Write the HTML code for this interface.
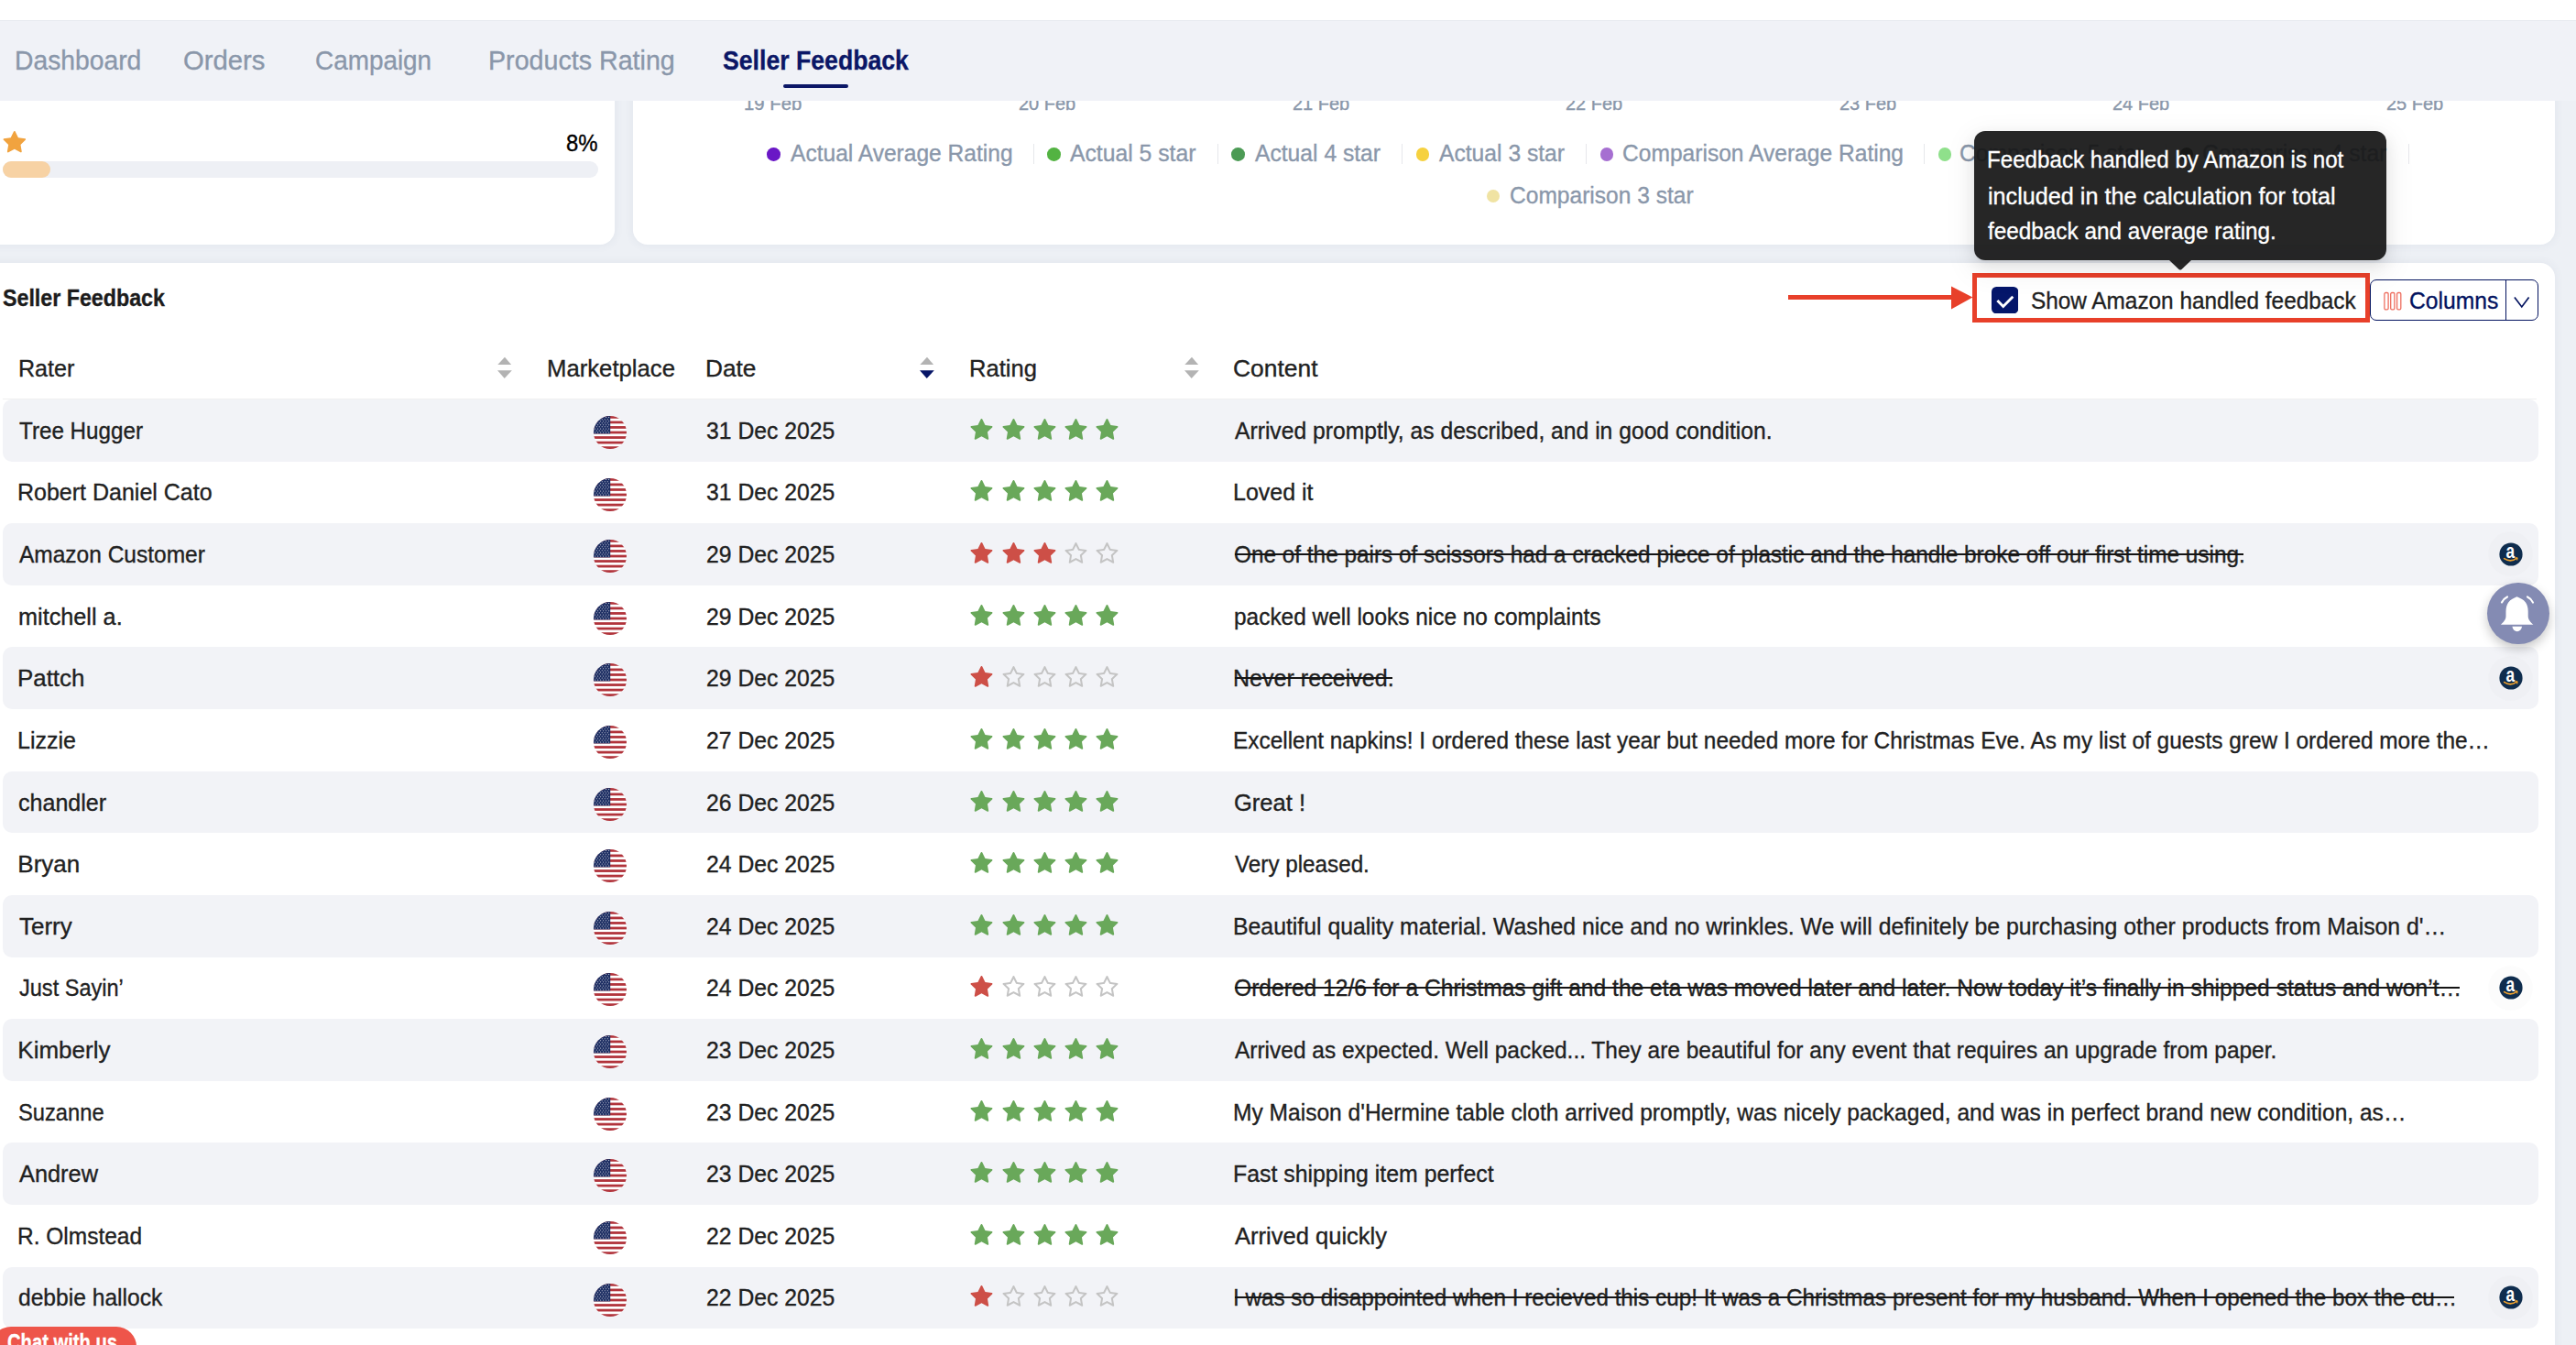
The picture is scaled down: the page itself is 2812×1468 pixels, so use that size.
<!DOCTYPE html>
<html><head><meta charset="utf-8"><style>
html,body{margin:0;padding:0}
body{width:2812px;height:1468px;overflow:hidden;position:relative;background:#fff;font-family:"Liberation Sans",sans-serif}
.b{position:absolute}
.t{position:absolute;white-space:nowrap;line-height:1;-webkit-text-stroke:0.35px currentColor}
svg{display:block}
</style></head><body>
<div class="b" style="left:0.00px;top:0.00px;width:2812.00px;height:22.00px;background:#fff"></div>
<div class="b" style="left:0.00px;top:110.00px;width:2812.00px;height:1358.00px;background:#edf0f5"></div>
<div class="b" style="left:-20.00px;top:60.00px;width:691.00px;height:207.00px;background:#fff;border-radius:0 0 16px 16px;box-shadow:0 0 9px 2px rgba(70,85,130,0.055)"></div>
<div class="b" style="left:691.00px;top:60.00px;width:2098.00px;height:207.00px;background:#fff;border-radius:16px;box-shadow:0 0 9px 2px rgba(70,85,130,0.055)"></div>
<div class="b" style="left:-20.00px;top:287.00px;width:2808.50px;height:1300.00px;background:#fff;border-radius:16px;box-shadow:0 0 9px 2px rgba(70,85,130,0.055)"></div>
<svg class="b" style="left:0.82px;top:140.83px" width="29.65" height="29.65" viewBox="0 0 1024 1024"><path d="M908.1 353.1l-253.9-36.9L540.7 86.1c-3.1-6.3-8.2-11.4-14.5-14.5-15.8-7.8-35-1.3-42.9 14.5L369.8 316.2l-253.9 36.9c-7 1-13.4 4.3-18.3 9.3a32.05 32.05 0 00.6 45.3l183.7 179.1-43.4 252.9a31.95 31.95 0 0046.4 33.7L512 754l227.1 119.4c6.2 3.3 13.4 4.4 20.3 3.2 17.4-3 29.1-19.5 26.1-36.9l-43.4-252.9 183.7-179.1c5-4.9 8.3-11.3 9.3-18.3 2.7-17.5-9.5-33.7-27-36.3z" fill="#f1a33f"/></svg>
<div class="t " style="left:618.18px;top:142.99px;font-size:26px;color:#000;font-weight:400;transform:scaleX(0.9194);transform-origin:0 0;">8%</div>
<div class="b" style="left:3.00px;top:176.10px;width:650.00px;height:17.70px;background:#eef0f5;border-radius:9px"></div>
<div class="b" style="left:3.00px;top:176.10px;width:52.00px;height:17.70px;background:#f7d2a4;border-radius:9px"></div>
<div class="t " style="left:812.46px;top:103.89px;font-size:19.5px;color:#8a97aa;font-weight:400;transform:scaleX(1.0424);transform-origin:0 0;">19 Feb</div>
<div class="t " style="left:1112.00px;top:103.89px;font-size:19.5px;color:#8a97aa;font-weight:400;transform:scaleX(1.0250);transform-origin:0 0;">20 Feb</div>
<div class="t " style="left:1410.50px;top:103.89px;font-size:19.5px;color:#8a97aa;font-weight:400;transform:scaleX(1.0250);transform-origin:0 0;">21 Feb</div>
<div class="t " style="left:1709.00px;top:103.89px;font-size:19.5px;color:#8a97aa;font-weight:400;transform:scaleX(1.0250);transform-origin:0 0;">22 Feb</div>
<div class="t " style="left:2007.50px;top:103.89px;font-size:19.5px;color:#8a97aa;font-weight:400;transform:scaleX(1.0250);transform-origin:0 0;">23 Feb</div>
<div class="t " style="left:2306.00px;top:103.89px;font-size:19.5px;color:#8a97aa;font-weight:400;transform:scaleX(1.0250);transform-origin:0 0;">24 Feb</div>
<div class="t " style="left:2604.50px;top:103.89px;font-size:19.5px;color:#8a97aa;font-weight:400;transform:scaleX(1.0250);transform-origin:0 0;">25 Feb</div>
<div class="b" style="left:837.20px;top:161.20px;width:14.60px;height:14.60px;background:#6a17c6;border-radius:50%"></div>
<div class="t " style="left:863.00px;top:153.89px;font-size:26px;color:#8a97aa;font-weight:400;transform:scaleX(0.9445);transform-origin:0 0;">Actual Average Rating</div>
<div class="b" style="left:1127.80px;top:157.00px;width:1.00px;height:22.00px;background:#e6e7eb"></div>
<div class="b" style="left:1143.20px;top:161.20px;width:14.60px;height:14.60px;background:#53b342;border-radius:50%"></div>
<div class="t " style="left:1168.40px;top:153.89px;font-size:26px;color:#8a97aa;font-weight:400;transform:scaleX(0.9510);transform-origin:0 0;">Actual 5 star</div>
<div class="b" style="left:1328.50px;top:157.00px;width:1.00px;height:22.00px;background:#e6e7eb"></div>
<div class="b" style="left:1344.10px;top:161.20px;width:14.60px;height:14.60px;background:#4c9b55;border-radius:50%"></div>
<div class="t " style="left:1369.50px;top:153.89px;font-size:26px;color:#8a97aa;font-weight:400;transform:scaleX(0.9483);transform-origin:0 0;">Actual 4 star</div>
<div class="b" style="left:1529.50px;top:157.00px;width:1.00px;height:22.00px;background:#e6e7eb"></div>
<div class="b" style="left:1545.70px;top:161.20px;width:14.60px;height:14.60px;background:#f6d13f;border-radius:50%"></div>
<div class="t " style="left:1571.00px;top:153.89px;font-size:26px;color:#8a97aa;font-weight:400;transform:scaleX(0.9483);transform-origin:0 0;">Actual 3 star</div>
<div class="b" style="left:1730.50px;top:157.00px;width:1.00px;height:22.00px;background:#e6e7eb"></div>
<div class="b" style="left:1746.70px;top:161.20px;width:14.60px;height:14.60px;background:#a66fd1;border-radius:50%"></div>
<div class="t " style="left:1771.25px;top:153.89px;font-size:26px;color:#8a97aa;font-weight:400;transform:scaleX(0.9455);transform-origin:0 0;">Comparison Average Rating</div>
<div class="b" style="left:2099.50px;top:157.00px;width:1.00px;height:22.00px;background:#e6e7eb"></div>
<div class="b" style="left:2115.50px;top:161.20px;width:14.60px;height:14.60px;background:#8fe08b;border-radius:50%"></div>
<div class="t " style="left:2139.05px;top:153.89px;font-size:26px;color:#8a97aa;font-weight:400;transform:scaleX(0.9476);transform-origin:0 0;">Comparison 5 star</div>
<div class="b" style="left:2363.50px;top:157.00px;width:1.00px;height:22.00px;background:#e6e7eb"></div>
<div class="b" style="left:2379.70px;top:161.20px;width:14.60px;height:14.60px;background:#3d4a3d;border-radius:50%"></div>
<div class="t " style="left:2403.55px;top:153.89px;font-size:26px;color:#8a97aa;font-weight:400;transform:scaleX(0.9476);transform-origin:0 0;">Comparison 4 star</div>
<div class="b" style="left:2628.50px;top:157.00px;width:1.00px;height:22.00px;background:#e6e7eb"></div>
<div class="b" style="left:1622.75px;top:206.65px;width:14.50px;height:14.50px;background:#f0e3a3;border-radius:50%"></div>
<div class="t " style="left:1648.16px;top:199.89px;font-size:26px;color:#8a97aa;font-weight:400;transform:scaleX(0.9448);transform-origin:0 0;">Comparison 3 star</div>
<div class="b" style="left:0.00px;top:22.00px;width:2812.00px;height:88.00px;background:#f0f2f7;border-top:1px solid #e6e9ef;box-sizing:border-box"></div>
<div class="t " style="left:15.98px;top:50.92px;font-size:29.5px;color:#8a97aa;font-weight:400;transform:scaleX(0.9582);transform-origin:0 0;">Dashboard</div>
<div class="t " style="left:199.91px;top:50.92px;font-size:29.5px;color:#8a97aa;font-weight:400;transform:scaleX(0.9921);transform-origin:0 0;">Orders</div>
<div class="t " style="left:343.95px;top:50.92px;font-size:29.5px;color:#8a97aa;font-weight:400;transform:scaleX(0.9455);transform-origin:0 0;">Campaign</div>
<div class="t " style="left:532.56px;top:50.92px;font-size:29.5px;color:#8a97aa;font-weight:400;transform:scaleX(0.9710);transform-origin:0 0;">Products Rating</div>
<div class="t " style="left:788.70px;top:50.92px;font-size:29.5px;color:#0b1766;font-weight:700;transform:scaleX(0.9031);transform-origin:0 0;">Seller Feedback</div>
<div class="b" style="left:854.80px;top:91.80px;width:71.30px;height:4.30px;background:#0b1766;border-radius:3px"></div>
<div class="t " style="left:3.00px;top:312.09px;font-size:26px;color:#1c1c1c;font-weight:700;transform:scaleX(0.8934);transform-origin:0 0;">Seller Feedback</div>
<div class="b" style="left:1952.00px;top:322.20px;width:180.00px;height:4.80px;background:#e8402a"></div>
<svg class="b" style="left:2130px;top:312px" width="26" height="26" viewBox="0 0 26 26"><path d="M0 0.4 L23.4 12.6 L0 25.4z" fill="#e8402a"/></svg>
<div class="b" style="left:2153.00px;top:297.80px;width:434.00px;height:54.20px;border:5px solid #e8402a;box-sizing:border-box"></div>
<svg class="b" style="left:2174px;top:312.8px" width="29.3" height="29.3" viewBox="0 0 29 29"><rect x="0" y="0" width="29" height="29" rx="5.2" fill="#04166a"/><path d="M6.3 14.9 L12.6 21.2 L23.1 10.7" fill="none" stroke="#fff" stroke-width="2.9" stroke-linecap="butt" stroke-linejoin="miter"/></svg>
<div class="t " style="left:2216.66px;top:314.89px;font-size:26px;color:#1f1f1f;font-weight:400;transform:scaleX(0.9365);transform-origin:0 0;">Show Amazon handled feedback</div>
<div class="b" style="left:2587.30px;top:305.10px;width:183.60px;height:44.70px;border:1.5px solid #03135f;border-radius:7px;box-sizing:border-box"></div>
<div class="b" style="left:2734.70px;top:305.10px;width:1.50px;height:44.70px;background:#03135f"></div>
<svg class="b" style="left:2601px;top:318px" width="22" height="21" viewBox="0 0 22 21"><g fill="none" stroke="#ee6f60" stroke-width="1.3"><rect x="1.9" y="1.5" width="4.2" height="18.3" rx="1.3"/><rect x="8.7" y="1.5" width="4.2" height="18.3" rx="1.3"/><rect x="15.6" y="1.5" width="4.2" height="18.3" rx="1.3"/></g></svg>
<div class="t " style="left:2630.25px;top:314.89px;font-size:26px;color:#03135f;font-weight:400;transform:scaleX(0.9475);transform-origin:0 0;">Columns</div>
<svg class="b" style="left:2740px;top:320px" width="26" height="20" viewBox="0 0 26 20"><path d="M4.9 4.5 L12.8 14.9 L20.6 4.5" fill="none" stroke="#03135f" stroke-width="1.7" stroke-linecap="butt" stroke-linejoin="miter"/></svg>
<div class="t " style="left:19.77px;top:388.99px;font-size:26px;color:#212121;font-weight:400;transform:scaleX(0.9645);transform-origin:0 0;">Rater</div>
<svg class="b" style="left:528.90px;top:380px" width="40" height="40" viewBox="0 0 40 40"><path d="M14.3 17.9 L22 9.8 L29.1 17.9z" fill="#b3b3b3"/><path d="M14 24.3 L29.8 24.3 L21.7 32.9z" fill="#b3b3b3"/></svg>
<div class="t " style="left:596.62px;top:388.99px;font-size:26px;color:#212121;font-weight:400;transform:scaleX(0.9885);transform-origin:0 0;">Marketplace</div>
<div class="t " style="left:769.68px;top:388.99px;font-size:26px;color:#212121;font-weight:400;transform:scaleX(1.0096);transform-origin:0 0;">Date</div>
<svg class="b" style="left:990.00px;top:380px" width="40" height="40" viewBox="0 0 40 40"><path d="M14.3 17.9 L22 9.8 L29.1 17.9z" fill="#b3b3b3"/><path d="M14 24.3 L29.8 24.3 L21.7 32.9z" fill="#061567"/></svg>
<div class="t " style="left:1057.63px;top:388.99px;font-size:26px;color:#212121;font-weight:400;transform:scaleX(0.9833);transform-origin:0 0;">Rating</div>
<svg class="b" style="left:1278.70px;top:380px" width="40" height="40" viewBox="0 0 40 40"><path d="M14.3 17.9 L22 9.8 L29.1 17.9z" fill="#b3b3b3"/><path d="M14 24.3 L29.8 24.3 L21.7 32.9z" fill="#b3b3b3"/></svg>
<div class="t " style="left:1346.48px;top:388.99px;font-size:26px;color:#212121;font-weight:400;transform:scaleX(1.0156);transform-origin:0 0;">Content</div>
<div class="b" style="left:3.00px;top:434.90px;width:2766.00px;height:1.00px;background:#f0f0f0"></div>
<div class="b" style="left:3.00px;top:436.00px;width:2767.70px;height:67.62px;background:#f2f3f7;border-radius:10px"></div>
<div class="t " style="left:21.30px;top:456.79px;font-size:26px;color:#212121;font-weight:400;transform:scaleX(0.9310);transform-origin:0 0;">Tree Hugger</div>
<div class="b" style="left:648px;top:453.90px;width:36px;height:36px"><svg width="36" height="36" viewBox="0 0 36 36"><defs><clipPath id="fc"><circle cx="18" cy="18" r="18"/></clipPath></defs><g clip-path="url(#fc)"><rect width="36" height="36" fill="#fff"/><rect y="0.00" width="36" height="2.77" fill="#b1333b"/><rect y="5.54" width="36" height="2.77" fill="#b1333b"/><rect y="11.08" width="36" height="2.77" fill="#b1333b"/><rect y="16.62" width="36" height="2.77" fill="#b1333b"/><rect y="22.15" width="36" height="2.77" fill="#b1333b"/><rect y="27.69" width="36" height="2.77" fill="#b1333b"/><rect y="33.23" width="36" height="2.77" fill="#b1333b"/><rect width="18.2" height="19.4" fill="#1c2d62"/><circle cx="1.70" cy="1.60" r="0.5" fill="#fff"/><circle cx="4.70" cy="1.60" r="0.5" fill="#fff"/><circle cx="7.70" cy="1.60" r="0.5" fill="#fff"/><circle cx="10.70" cy="1.60" r="0.5" fill="#fff"/><circle cx="13.70" cy="1.60" r="0.5" fill="#fff"/><circle cx="16.70" cy="1.60" r="0.5" fill="#fff"/><circle cx="3.20" cy="3.65" r="0.5" fill="#fff"/><circle cx="6.20" cy="3.65" r="0.5" fill="#fff"/><circle cx="9.20" cy="3.65" r="0.5" fill="#fff"/><circle cx="12.20" cy="3.65" r="0.5" fill="#fff"/><circle cx="15.20" cy="3.65" r="0.5" fill="#fff"/><circle cx="1.70" cy="5.70" r="0.5" fill="#fff"/><circle cx="4.70" cy="5.70" r="0.5" fill="#fff"/><circle cx="7.70" cy="5.70" r="0.5" fill="#fff"/><circle cx="10.70" cy="5.70" r="0.5" fill="#fff"/><circle cx="13.70" cy="5.70" r="0.5" fill="#fff"/><circle cx="16.70" cy="5.70" r="0.5" fill="#fff"/><circle cx="3.20" cy="7.75" r="0.5" fill="#fff"/><circle cx="6.20" cy="7.75" r="0.5" fill="#fff"/><circle cx="9.20" cy="7.75" r="0.5" fill="#fff"/><circle cx="12.20" cy="7.75" r="0.5" fill="#fff"/><circle cx="15.20" cy="7.75" r="0.5" fill="#fff"/><circle cx="1.70" cy="9.80" r="0.5" fill="#fff"/><circle cx="4.70" cy="9.80" r="0.5" fill="#fff"/><circle cx="7.70" cy="9.80" r="0.5" fill="#fff"/><circle cx="10.70" cy="9.80" r="0.5" fill="#fff"/><circle cx="13.70" cy="9.80" r="0.5" fill="#fff"/><circle cx="16.70" cy="9.80" r="0.5" fill="#fff"/><circle cx="3.20" cy="11.85" r="0.5" fill="#fff"/><circle cx="6.20" cy="11.85" r="0.5" fill="#fff"/><circle cx="9.20" cy="11.85" r="0.5" fill="#fff"/><circle cx="12.20" cy="11.85" r="0.5" fill="#fff"/><circle cx="15.20" cy="11.85" r="0.5" fill="#fff"/><circle cx="1.70" cy="13.90" r="0.5" fill="#fff"/><circle cx="4.70" cy="13.90" r="0.5" fill="#fff"/><circle cx="7.70" cy="13.90" r="0.5" fill="#fff"/><circle cx="10.70" cy="13.90" r="0.5" fill="#fff"/><circle cx="13.70" cy="13.90" r="0.5" fill="#fff"/><circle cx="16.70" cy="13.90" r="0.5" fill="#fff"/><circle cx="3.20" cy="15.95" r="0.5" fill="#fff"/><circle cx="6.20" cy="15.95" r="0.5" fill="#fff"/><circle cx="9.20" cy="15.95" r="0.5" fill="#fff"/><circle cx="12.20" cy="15.95" r="0.5" fill="#fff"/><circle cx="15.20" cy="15.95" r="0.5" fill="#fff"/><circle cx="1.70" cy="18.00" r="0.5" fill="#fff"/><circle cx="4.70" cy="18.00" r="0.5" fill="#fff"/><circle cx="7.70" cy="18.00" r="0.5" fill="#fff"/><circle cx="10.70" cy="18.00" r="0.5" fill="#fff"/><circle cx="13.70" cy="18.00" r="0.5" fill="#fff"/><circle cx="16.70" cy="18.00" r="0.5" fill="#fff"/></g></svg></div>
<div class="t " style="left:770.75px;top:456.79px;font-size:26px;color:#212121;font-weight:400;transform:scaleX(0.9514);transform-origin:0 0;">31 Dec 2025</div>
<svg class="b" style="left:1057.29px;top:454.78px" width="28.93" height="28.93" viewBox="0 0 1024 1024"><path d="M908.1 353.1l-253.9-36.9L540.7 86.1c-3.1-6.3-8.2-11.4-14.5-14.5-15.8-7.8-35-1.3-42.9 14.5L369.8 316.2l-253.9 36.9c-7 1-13.4 4.3-18.3 9.3a32.05 32.05 0 00.6 45.3l183.7 179.1-43.4 252.9a31.95 31.95 0 0046.4 33.7L512 754l227.1 119.4c6.2 3.3 13.4 4.4 20.3 3.2 17.4-3 29.1-19.5 26.1-36.9l-43.4-252.9 183.7-179.1c5-4.9 8.3-11.3 9.3-18.3 2.7-17.5-9.5-33.7-27-36.3z" fill="#69a85a"/></svg>
<svg class="b" style="left:1091.59px;top:454.78px" width="28.93" height="28.93" viewBox="0 0 1024 1024"><path d="M908.1 353.1l-253.9-36.9L540.7 86.1c-3.1-6.3-8.2-11.4-14.5-14.5-15.8-7.8-35-1.3-42.9 14.5L369.8 316.2l-253.9 36.9c-7 1-13.4 4.3-18.3 9.3a32.05 32.05 0 00.6 45.3l183.7 179.1-43.4 252.9a31.95 31.95 0 0046.4 33.7L512 754l227.1 119.4c6.2 3.3 13.4 4.4 20.3 3.2 17.4-3 29.1-19.5 26.1-36.9l-43.4-252.9 183.7-179.1c5-4.9 8.3-11.3 9.3-18.3 2.7-17.5-9.5-33.7-27-36.3z" fill="#69a85a"/></svg>
<svg class="b" style="left:1125.89px;top:454.78px" width="28.93" height="28.93" viewBox="0 0 1024 1024"><path d="M908.1 353.1l-253.9-36.9L540.7 86.1c-3.1-6.3-8.2-11.4-14.5-14.5-15.8-7.8-35-1.3-42.9 14.5L369.8 316.2l-253.9 36.9c-7 1-13.4 4.3-18.3 9.3a32.05 32.05 0 00.6 45.3l183.7 179.1-43.4 252.9a31.95 31.95 0 0046.4 33.7L512 754l227.1 119.4c6.2 3.3 13.4 4.4 20.3 3.2 17.4-3 29.1-19.5 26.1-36.9l-43.4-252.9 183.7-179.1c5-4.9 8.3-11.3 9.3-18.3 2.7-17.5-9.5-33.7-27-36.3z" fill="#69a85a"/></svg>
<svg class="b" style="left:1160.19px;top:454.78px" width="28.93" height="28.93" viewBox="0 0 1024 1024"><path d="M908.1 353.1l-253.9-36.9L540.7 86.1c-3.1-6.3-8.2-11.4-14.5-14.5-15.8-7.8-35-1.3-42.9 14.5L369.8 316.2l-253.9 36.9c-7 1-13.4 4.3-18.3 9.3a32.05 32.05 0 00.6 45.3l183.7 179.1-43.4 252.9a31.95 31.95 0 0046.4 33.7L512 754l227.1 119.4c6.2 3.3 13.4 4.4 20.3 3.2 17.4-3 29.1-19.5 26.1-36.9l-43.4-252.9 183.7-179.1c5-4.9 8.3-11.3 9.3-18.3 2.7-17.5-9.5-33.7-27-36.3z" fill="#69a85a"/></svg>
<svg class="b" style="left:1194.49px;top:454.78px" width="28.93" height="28.93" viewBox="0 0 1024 1024"><path d="M908.1 353.1l-253.9-36.9L540.7 86.1c-3.1-6.3-8.2-11.4-14.5-14.5-15.8-7.8-35-1.3-42.9 14.5L369.8 316.2l-253.9 36.9c-7 1-13.4 4.3-18.3 9.3a32.05 32.05 0 00.6 45.3l183.7 179.1-43.4 252.9a31.95 31.95 0 0046.4 33.7L512 754l227.1 119.4c6.2 3.3 13.4 4.4 20.3 3.2 17.4-3 29.1-19.5 26.1-36.9l-43.4-252.9 183.7-179.1c5-4.9 8.3-11.3 9.3-18.3 2.7-17.5-9.5-33.7-27-36.3z" fill="#69a85a"/></svg>
<div class="t " style="left:1348.00px;top:456.79px;font-size:26px;color:#212121;font-weight:400;transform:scaleX(0.9490);transform-origin:0 0;">Arrived promptly, as described, and in good condition.</div>
<div class="t " style="left:19.38px;top:524.41px;font-size:26px;color:#212121;font-weight:400;transform:scaleX(0.9616);transform-origin:0 0;">Robert Daniel Cato</div>
<div class="b" style="left:648px;top:521.52px;width:36px;height:36px"><svg width="36" height="36" viewBox="0 0 36 36"><defs><clipPath id="fc"><circle cx="18" cy="18" r="18"/></clipPath></defs><g clip-path="url(#fc)"><rect width="36" height="36" fill="#fff"/><rect y="0.00" width="36" height="2.77" fill="#b1333b"/><rect y="5.54" width="36" height="2.77" fill="#b1333b"/><rect y="11.08" width="36" height="2.77" fill="#b1333b"/><rect y="16.62" width="36" height="2.77" fill="#b1333b"/><rect y="22.15" width="36" height="2.77" fill="#b1333b"/><rect y="27.69" width="36" height="2.77" fill="#b1333b"/><rect y="33.23" width="36" height="2.77" fill="#b1333b"/><rect width="18.2" height="19.4" fill="#1c2d62"/><circle cx="1.70" cy="1.60" r="0.5" fill="#fff"/><circle cx="4.70" cy="1.60" r="0.5" fill="#fff"/><circle cx="7.70" cy="1.60" r="0.5" fill="#fff"/><circle cx="10.70" cy="1.60" r="0.5" fill="#fff"/><circle cx="13.70" cy="1.60" r="0.5" fill="#fff"/><circle cx="16.70" cy="1.60" r="0.5" fill="#fff"/><circle cx="3.20" cy="3.65" r="0.5" fill="#fff"/><circle cx="6.20" cy="3.65" r="0.5" fill="#fff"/><circle cx="9.20" cy="3.65" r="0.5" fill="#fff"/><circle cx="12.20" cy="3.65" r="0.5" fill="#fff"/><circle cx="15.20" cy="3.65" r="0.5" fill="#fff"/><circle cx="1.70" cy="5.70" r="0.5" fill="#fff"/><circle cx="4.70" cy="5.70" r="0.5" fill="#fff"/><circle cx="7.70" cy="5.70" r="0.5" fill="#fff"/><circle cx="10.70" cy="5.70" r="0.5" fill="#fff"/><circle cx="13.70" cy="5.70" r="0.5" fill="#fff"/><circle cx="16.70" cy="5.70" r="0.5" fill="#fff"/><circle cx="3.20" cy="7.75" r="0.5" fill="#fff"/><circle cx="6.20" cy="7.75" r="0.5" fill="#fff"/><circle cx="9.20" cy="7.75" r="0.5" fill="#fff"/><circle cx="12.20" cy="7.75" r="0.5" fill="#fff"/><circle cx="15.20" cy="7.75" r="0.5" fill="#fff"/><circle cx="1.70" cy="9.80" r="0.5" fill="#fff"/><circle cx="4.70" cy="9.80" r="0.5" fill="#fff"/><circle cx="7.70" cy="9.80" r="0.5" fill="#fff"/><circle cx="10.70" cy="9.80" r="0.5" fill="#fff"/><circle cx="13.70" cy="9.80" r="0.5" fill="#fff"/><circle cx="16.70" cy="9.80" r="0.5" fill="#fff"/><circle cx="3.20" cy="11.85" r="0.5" fill="#fff"/><circle cx="6.20" cy="11.85" r="0.5" fill="#fff"/><circle cx="9.20" cy="11.85" r="0.5" fill="#fff"/><circle cx="12.20" cy="11.85" r="0.5" fill="#fff"/><circle cx="15.20" cy="11.85" r="0.5" fill="#fff"/><circle cx="1.70" cy="13.90" r="0.5" fill="#fff"/><circle cx="4.70" cy="13.90" r="0.5" fill="#fff"/><circle cx="7.70" cy="13.90" r="0.5" fill="#fff"/><circle cx="10.70" cy="13.90" r="0.5" fill="#fff"/><circle cx="13.70" cy="13.90" r="0.5" fill="#fff"/><circle cx="16.70" cy="13.90" r="0.5" fill="#fff"/><circle cx="3.20" cy="15.95" r="0.5" fill="#fff"/><circle cx="6.20" cy="15.95" r="0.5" fill="#fff"/><circle cx="9.20" cy="15.95" r="0.5" fill="#fff"/><circle cx="12.20" cy="15.95" r="0.5" fill="#fff"/><circle cx="15.20" cy="15.95" r="0.5" fill="#fff"/><circle cx="1.70" cy="18.00" r="0.5" fill="#fff"/><circle cx="4.70" cy="18.00" r="0.5" fill="#fff"/><circle cx="7.70" cy="18.00" r="0.5" fill="#fff"/><circle cx="10.70" cy="18.00" r="0.5" fill="#fff"/><circle cx="13.70" cy="18.00" r="0.5" fill="#fff"/><circle cx="16.70" cy="18.00" r="0.5" fill="#fff"/></g></svg></div>
<div class="t " style="left:770.75px;top:524.41px;font-size:26px;color:#212121;font-weight:400;transform:scaleX(0.9514);transform-origin:0 0;">31 Dec 2025</div>
<svg class="b" style="left:1057.29px;top:522.40px" width="28.93" height="28.93" viewBox="0 0 1024 1024"><path d="M908.1 353.1l-253.9-36.9L540.7 86.1c-3.1-6.3-8.2-11.4-14.5-14.5-15.8-7.8-35-1.3-42.9 14.5L369.8 316.2l-253.9 36.9c-7 1-13.4 4.3-18.3 9.3a32.05 32.05 0 00.6 45.3l183.7 179.1-43.4 252.9a31.95 31.95 0 0046.4 33.7L512 754l227.1 119.4c6.2 3.3 13.4 4.4 20.3 3.2 17.4-3 29.1-19.5 26.1-36.9l-43.4-252.9 183.7-179.1c5-4.9 8.3-11.3 9.3-18.3 2.7-17.5-9.5-33.7-27-36.3z" fill="#69a85a"/></svg>
<svg class="b" style="left:1091.59px;top:522.40px" width="28.93" height="28.93" viewBox="0 0 1024 1024"><path d="M908.1 353.1l-253.9-36.9L540.7 86.1c-3.1-6.3-8.2-11.4-14.5-14.5-15.8-7.8-35-1.3-42.9 14.5L369.8 316.2l-253.9 36.9c-7 1-13.4 4.3-18.3 9.3a32.05 32.05 0 00.6 45.3l183.7 179.1-43.4 252.9a31.95 31.95 0 0046.4 33.7L512 754l227.1 119.4c6.2 3.3 13.4 4.4 20.3 3.2 17.4-3 29.1-19.5 26.1-36.9l-43.4-252.9 183.7-179.1c5-4.9 8.3-11.3 9.3-18.3 2.7-17.5-9.5-33.7-27-36.3z" fill="#69a85a"/></svg>
<svg class="b" style="left:1125.89px;top:522.40px" width="28.93" height="28.93" viewBox="0 0 1024 1024"><path d="M908.1 353.1l-253.9-36.9L540.7 86.1c-3.1-6.3-8.2-11.4-14.5-14.5-15.8-7.8-35-1.3-42.9 14.5L369.8 316.2l-253.9 36.9c-7 1-13.4 4.3-18.3 9.3a32.05 32.05 0 00.6 45.3l183.7 179.1-43.4 252.9a31.95 31.95 0 0046.4 33.7L512 754l227.1 119.4c6.2 3.3 13.4 4.4 20.3 3.2 17.4-3 29.1-19.5 26.1-36.9l-43.4-252.9 183.7-179.1c5-4.9 8.3-11.3 9.3-18.3 2.7-17.5-9.5-33.7-27-36.3z" fill="#69a85a"/></svg>
<svg class="b" style="left:1160.19px;top:522.40px" width="28.93" height="28.93" viewBox="0 0 1024 1024"><path d="M908.1 353.1l-253.9-36.9L540.7 86.1c-3.1-6.3-8.2-11.4-14.5-14.5-15.8-7.8-35-1.3-42.9 14.5L369.8 316.2l-253.9 36.9c-7 1-13.4 4.3-18.3 9.3a32.05 32.05 0 00.6 45.3l183.7 179.1-43.4 252.9a31.95 31.95 0 0046.4 33.7L512 754l227.1 119.4c6.2 3.3 13.4 4.4 20.3 3.2 17.4-3 29.1-19.5 26.1-36.9l-43.4-252.9 183.7-179.1c5-4.9 8.3-11.3 9.3-18.3 2.7-17.5-9.5-33.7-27-36.3z" fill="#69a85a"/></svg>
<svg class="b" style="left:1194.49px;top:522.40px" width="28.93" height="28.93" viewBox="0 0 1024 1024"><path d="M908.1 353.1l-253.9-36.9L540.7 86.1c-3.1-6.3-8.2-11.4-14.5-14.5-15.8-7.8-35-1.3-42.9 14.5L369.8 316.2l-253.9 36.9c-7 1-13.4 4.3-18.3 9.3a32.05 32.05 0 00.6 45.3l183.7 179.1-43.4 252.9a31.95 31.95 0 0046.4 33.7L512 754l227.1 119.4c6.2 3.3 13.4 4.4 20.3 3.2 17.4-3 29.1-19.5 26.1-36.9l-43.4-252.9 183.7-179.1c5-4.9 8.3-11.3 9.3-18.3 2.7-17.5-9.5-33.7-27-36.3z" fill="#69a85a"/></svg>
<div class="t " style="left:1346.08px;top:524.41px;font-size:26px;color:#212121;font-weight:400;transform:scaleX(0.9607);transform-origin:0 0;">Loved it</div>
<div class="b" style="left:3.00px;top:571.24px;width:2767.70px;height:67.62px;background:#f2f3f7;border-radius:10px"></div>
<div class="t " style="left:21.30px;top:592.03px;font-size:26px;color:#212121;font-weight:400;transform:scaleX(0.9421);transform-origin:0 0;">Amazon Customer</div>
<div class="b" style="left:648px;top:589.14px;width:36px;height:36px"><svg width="36" height="36" viewBox="0 0 36 36"><defs><clipPath id="fc"><circle cx="18" cy="18" r="18"/></clipPath></defs><g clip-path="url(#fc)"><rect width="36" height="36" fill="#fff"/><rect y="0.00" width="36" height="2.77" fill="#b1333b"/><rect y="5.54" width="36" height="2.77" fill="#b1333b"/><rect y="11.08" width="36" height="2.77" fill="#b1333b"/><rect y="16.62" width="36" height="2.77" fill="#b1333b"/><rect y="22.15" width="36" height="2.77" fill="#b1333b"/><rect y="27.69" width="36" height="2.77" fill="#b1333b"/><rect y="33.23" width="36" height="2.77" fill="#b1333b"/><rect width="18.2" height="19.4" fill="#1c2d62"/><circle cx="1.70" cy="1.60" r="0.5" fill="#fff"/><circle cx="4.70" cy="1.60" r="0.5" fill="#fff"/><circle cx="7.70" cy="1.60" r="0.5" fill="#fff"/><circle cx="10.70" cy="1.60" r="0.5" fill="#fff"/><circle cx="13.70" cy="1.60" r="0.5" fill="#fff"/><circle cx="16.70" cy="1.60" r="0.5" fill="#fff"/><circle cx="3.20" cy="3.65" r="0.5" fill="#fff"/><circle cx="6.20" cy="3.65" r="0.5" fill="#fff"/><circle cx="9.20" cy="3.65" r="0.5" fill="#fff"/><circle cx="12.20" cy="3.65" r="0.5" fill="#fff"/><circle cx="15.20" cy="3.65" r="0.5" fill="#fff"/><circle cx="1.70" cy="5.70" r="0.5" fill="#fff"/><circle cx="4.70" cy="5.70" r="0.5" fill="#fff"/><circle cx="7.70" cy="5.70" r="0.5" fill="#fff"/><circle cx="10.70" cy="5.70" r="0.5" fill="#fff"/><circle cx="13.70" cy="5.70" r="0.5" fill="#fff"/><circle cx="16.70" cy="5.70" r="0.5" fill="#fff"/><circle cx="3.20" cy="7.75" r="0.5" fill="#fff"/><circle cx="6.20" cy="7.75" r="0.5" fill="#fff"/><circle cx="9.20" cy="7.75" r="0.5" fill="#fff"/><circle cx="12.20" cy="7.75" r="0.5" fill="#fff"/><circle cx="15.20" cy="7.75" r="0.5" fill="#fff"/><circle cx="1.70" cy="9.80" r="0.5" fill="#fff"/><circle cx="4.70" cy="9.80" r="0.5" fill="#fff"/><circle cx="7.70" cy="9.80" r="0.5" fill="#fff"/><circle cx="10.70" cy="9.80" r="0.5" fill="#fff"/><circle cx="13.70" cy="9.80" r="0.5" fill="#fff"/><circle cx="16.70" cy="9.80" r="0.5" fill="#fff"/><circle cx="3.20" cy="11.85" r="0.5" fill="#fff"/><circle cx="6.20" cy="11.85" r="0.5" fill="#fff"/><circle cx="9.20" cy="11.85" r="0.5" fill="#fff"/><circle cx="12.20" cy="11.85" r="0.5" fill="#fff"/><circle cx="15.20" cy="11.85" r="0.5" fill="#fff"/><circle cx="1.70" cy="13.90" r="0.5" fill="#fff"/><circle cx="4.70" cy="13.90" r="0.5" fill="#fff"/><circle cx="7.70" cy="13.90" r="0.5" fill="#fff"/><circle cx="10.70" cy="13.90" r="0.5" fill="#fff"/><circle cx="13.70" cy="13.90" r="0.5" fill="#fff"/><circle cx="16.70" cy="13.90" r="0.5" fill="#fff"/><circle cx="3.20" cy="15.95" r="0.5" fill="#fff"/><circle cx="6.20" cy="15.95" r="0.5" fill="#fff"/><circle cx="9.20" cy="15.95" r="0.5" fill="#fff"/><circle cx="12.20" cy="15.95" r="0.5" fill="#fff"/><circle cx="15.20" cy="15.95" r="0.5" fill="#fff"/><circle cx="1.70" cy="18.00" r="0.5" fill="#fff"/><circle cx="4.70" cy="18.00" r="0.5" fill="#fff"/><circle cx="7.70" cy="18.00" r="0.5" fill="#fff"/><circle cx="10.70" cy="18.00" r="0.5" fill="#fff"/><circle cx="13.70" cy="18.00" r="0.5" fill="#fff"/><circle cx="16.70" cy="18.00" r="0.5" fill="#fff"/></g></svg></div>
<div class="t " style="left:770.75px;top:592.03px;font-size:26px;color:#212121;font-weight:400;transform:scaleX(0.9514);transform-origin:0 0;">29 Dec 2025</div>
<svg class="b" style="left:1057.29px;top:590.02px" width="28.93" height="28.93" viewBox="0 0 1024 1024"><path d="M908.1 353.1l-253.9-36.9L540.7 86.1c-3.1-6.3-8.2-11.4-14.5-14.5-15.8-7.8-35-1.3-42.9 14.5L369.8 316.2l-253.9 36.9c-7 1-13.4 4.3-18.3 9.3a32.05 32.05 0 00.6 45.3l183.7 179.1-43.4 252.9a31.95 31.95 0 0046.4 33.7L512 754l227.1 119.4c6.2 3.3 13.4 4.4 20.3 3.2 17.4-3 29.1-19.5 26.1-36.9l-43.4-252.9 183.7-179.1c5-4.9 8.3-11.3 9.3-18.3 2.7-17.5-9.5-33.7-27-36.3z" fill="#cd4f47"/></svg>
<svg class="b" style="left:1091.59px;top:590.02px" width="28.93" height="28.93" viewBox="0 0 1024 1024"><path d="M908.1 353.1l-253.9-36.9L540.7 86.1c-3.1-6.3-8.2-11.4-14.5-14.5-15.8-7.8-35-1.3-42.9 14.5L369.8 316.2l-253.9 36.9c-7 1-13.4 4.3-18.3 9.3a32.05 32.05 0 00.6 45.3l183.7 179.1-43.4 252.9a31.95 31.95 0 0046.4 33.7L512 754l227.1 119.4c6.2 3.3 13.4 4.4 20.3 3.2 17.4-3 29.1-19.5 26.1-36.9l-43.4-252.9 183.7-179.1c5-4.9 8.3-11.3 9.3-18.3 2.7-17.5-9.5-33.7-27-36.3z" fill="#cd4f47"/></svg>
<svg class="b" style="left:1125.89px;top:590.02px" width="28.93" height="28.93" viewBox="0 0 1024 1024"><path d="M908.1 353.1l-253.9-36.9L540.7 86.1c-3.1-6.3-8.2-11.4-14.5-14.5-15.8-7.8-35-1.3-42.9 14.5L369.8 316.2l-253.9 36.9c-7 1-13.4 4.3-18.3 9.3a32.05 32.05 0 00.6 45.3l183.7 179.1-43.4 252.9a31.95 31.95 0 0046.4 33.7L512 754l227.1 119.4c6.2 3.3 13.4 4.4 20.3 3.2 17.4-3 29.1-19.5 26.1-36.9l-43.4-252.9 183.7-179.1c5-4.9 8.3-11.3 9.3-18.3 2.7-17.5-9.5-33.7-27-36.3z" fill="#cd4f47"/></svg>
<svg class="b" style="left:1160.19px;top:590.02px" width="28.93" height="28.93" viewBox="0 0 1024 1024"><path d="M908.1 353.1l-253.9-36.9L540.7 86.1c-3.1-6.3-8.2-11.4-14.5-14.5-15.8-7.8-35-1.3-42.9 14.5L369.8 316.2l-253.9 36.9c-7 1-13.4 4.3-18.3 9.3a32.05 32.05 0 00.6 45.3l183.7 179.1-43.4 252.9a31.95 31.95 0 0046.4 33.7L512 754l227.1 119.4c6.2 3.3 13.4 4.4 20.3 3.2 17.4-3 29.1-19.5 26.1-36.9l-43.4-252.9 183.7-179.1c5-4.9 8.3-11.3 9.3-18.3 2.7-17.5-9.5-33.7-27-36.3zM664.8 561.6l36.1 210.3L512 672.7 323.1 772l36.1-210.3-152.8-149L417.6 382 512 190.7 606.4 382l211.2 30.7-152.8 148.9z" fill="#c4c4c4" fill-rule="nonzero"/></svg>
<svg class="b" style="left:1194.49px;top:590.02px" width="28.93" height="28.93" viewBox="0 0 1024 1024"><path d="M908.1 353.1l-253.9-36.9L540.7 86.1c-3.1-6.3-8.2-11.4-14.5-14.5-15.8-7.8-35-1.3-42.9 14.5L369.8 316.2l-253.9 36.9c-7 1-13.4 4.3-18.3 9.3a32.05 32.05 0 00.6 45.3l183.7 179.1-43.4 252.9a31.95 31.95 0 0046.4 33.7L512 754l227.1 119.4c6.2 3.3 13.4 4.4 20.3 3.2 17.4-3 29.1-19.5 26.1-36.9l-43.4-252.9 183.7-179.1c5-4.9 8.3-11.3 9.3-18.3 2.7-17.5-9.5-33.7-27-36.3zM664.8 561.6l36.1 210.3L512 672.7 323.1 772l36.1-210.3-152.8-149L417.6 382 512 190.7 606.4 382l211.2 30.7-152.8 148.9z" fill="#c4c4c4" fill-rule="nonzero"/></svg>
<div class="t " style="left:1347.06px;top:592.03px;font-size:26px;color:#212121;font-weight:400;transform:scaleX(0.9363);transform-origin:0 0;">One of the pairs of scissors had a cracked piece of plastic and the handle broke off our first time using.</div>
<div class="b" style="left:1347.50px;top:603.84px;width:1101.60px;height:2.10px;background:#141414"></div>
<div class="b" style="left:2716px;top:580.44px;width:49px;height:49px;border-radius:50%;background:rgba(0,0,0,0.012)"></div>
<div class="b" style="left:2727.5px;top:591.74px;width:26px;height:26px"><svg width="26" height="26" viewBox="0 0 26 26"><circle cx="13" cy="13" r="12.6" fill="#0f2d4e"/><text x="0" y="0" transform="translate(7.6,16.9) scale(0.8,1)" font-family="Liberation Sans" font-weight="700" font-size="21.5" fill="#fff">a</text><path d="M5.6 17.6 Q12.6 22.4 19.6 17.2" fill="none" stroke="#f0a22e" stroke-width="1.6" stroke-linecap="round"/><path d="M17.8 16.9 L19.9 17.0 L19.7 19.0" fill="none" stroke="#f0a22e" stroke-width="1.2" stroke-linecap="round" stroke-linejoin="round"/></svg></div>
<div class="t " style="left:20.33px;top:659.65px;font-size:26px;color:#212121;font-weight:400;transform:scaleX(0.9711);transform-origin:0 0;">mitchell a.</div>
<div class="b" style="left:648px;top:656.76px;width:36px;height:36px"><svg width="36" height="36" viewBox="0 0 36 36"><defs><clipPath id="fc"><circle cx="18" cy="18" r="18"/></clipPath></defs><g clip-path="url(#fc)"><rect width="36" height="36" fill="#fff"/><rect y="0.00" width="36" height="2.77" fill="#b1333b"/><rect y="5.54" width="36" height="2.77" fill="#b1333b"/><rect y="11.08" width="36" height="2.77" fill="#b1333b"/><rect y="16.62" width="36" height="2.77" fill="#b1333b"/><rect y="22.15" width="36" height="2.77" fill="#b1333b"/><rect y="27.69" width="36" height="2.77" fill="#b1333b"/><rect y="33.23" width="36" height="2.77" fill="#b1333b"/><rect width="18.2" height="19.4" fill="#1c2d62"/><circle cx="1.70" cy="1.60" r="0.5" fill="#fff"/><circle cx="4.70" cy="1.60" r="0.5" fill="#fff"/><circle cx="7.70" cy="1.60" r="0.5" fill="#fff"/><circle cx="10.70" cy="1.60" r="0.5" fill="#fff"/><circle cx="13.70" cy="1.60" r="0.5" fill="#fff"/><circle cx="16.70" cy="1.60" r="0.5" fill="#fff"/><circle cx="3.20" cy="3.65" r="0.5" fill="#fff"/><circle cx="6.20" cy="3.65" r="0.5" fill="#fff"/><circle cx="9.20" cy="3.65" r="0.5" fill="#fff"/><circle cx="12.20" cy="3.65" r="0.5" fill="#fff"/><circle cx="15.20" cy="3.65" r="0.5" fill="#fff"/><circle cx="1.70" cy="5.70" r="0.5" fill="#fff"/><circle cx="4.70" cy="5.70" r="0.5" fill="#fff"/><circle cx="7.70" cy="5.70" r="0.5" fill="#fff"/><circle cx="10.70" cy="5.70" r="0.5" fill="#fff"/><circle cx="13.70" cy="5.70" r="0.5" fill="#fff"/><circle cx="16.70" cy="5.70" r="0.5" fill="#fff"/><circle cx="3.20" cy="7.75" r="0.5" fill="#fff"/><circle cx="6.20" cy="7.75" r="0.5" fill="#fff"/><circle cx="9.20" cy="7.75" r="0.5" fill="#fff"/><circle cx="12.20" cy="7.75" r="0.5" fill="#fff"/><circle cx="15.20" cy="7.75" r="0.5" fill="#fff"/><circle cx="1.70" cy="9.80" r="0.5" fill="#fff"/><circle cx="4.70" cy="9.80" r="0.5" fill="#fff"/><circle cx="7.70" cy="9.80" r="0.5" fill="#fff"/><circle cx="10.70" cy="9.80" r="0.5" fill="#fff"/><circle cx="13.70" cy="9.80" r="0.5" fill="#fff"/><circle cx="16.70" cy="9.80" r="0.5" fill="#fff"/><circle cx="3.20" cy="11.85" r="0.5" fill="#fff"/><circle cx="6.20" cy="11.85" r="0.5" fill="#fff"/><circle cx="9.20" cy="11.85" r="0.5" fill="#fff"/><circle cx="12.20" cy="11.85" r="0.5" fill="#fff"/><circle cx="15.20" cy="11.85" r="0.5" fill="#fff"/><circle cx="1.70" cy="13.90" r="0.5" fill="#fff"/><circle cx="4.70" cy="13.90" r="0.5" fill="#fff"/><circle cx="7.70" cy="13.90" r="0.5" fill="#fff"/><circle cx="10.70" cy="13.90" r="0.5" fill="#fff"/><circle cx="13.70" cy="13.90" r="0.5" fill="#fff"/><circle cx="16.70" cy="13.90" r="0.5" fill="#fff"/><circle cx="3.20" cy="15.95" r="0.5" fill="#fff"/><circle cx="6.20" cy="15.95" r="0.5" fill="#fff"/><circle cx="9.20" cy="15.95" r="0.5" fill="#fff"/><circle cx="12.20" cy="15.95" r="0.5" fill="#fff"/><circle cx="15.20" cy="15.95" r="0.5" fill="#fff"/><circle cx="1.70" cy="18.00" r="0.5" fill="#fff"/><circle cx="4.70" cy="18.00" r="0.5" fill="#fff"/><circle cx="7.70" cy="18.00" r="0.5" fill="#fff"/><circle cx="10.70" cy="18.00" r="0.5" fill="#fff"/><circle cx="13.70" cy="18.00" r="0.5" fill="#fff"/><circle cx="16.70" cy="18.00" r="0.5" fill="#fff"/></g></svg></div>
<div class="t " style="left:770.75px;top:659.65px;font-size:26px;color:#212121;font-weight:400;transform:scaleX(0.9514);transform-origin:0 0;">29 Dec 2025</div>
<svg class="b" style="left:1057.29px;top:657.64px" width="28.93" height="28.93" viewBox="0 0 1024 1024"><path d="M908.1 353.1l-253.9-36.9L540.7 86.1c-3.1-6.3-8.2-11.4-14.5-14.5-15.8-7.8-35-1.3-42.9 14.5L369.8 316.2l-253.9 36.9c-7 1-13.4 4.3-18.3 9.3a32.05 32.05 0 00.6 45.3l183.7 179.1-43.4 252.9a31.95 31.95 0 0046.4 33.7L512 754l227.1 119.4c6.2 3.3 13.4 4.4 20.3 3.2 17.4-3 29.1-19.5 26.1-36.9l-43.4-252.9 183.7-179.1c5-4.9 8.3-11.3 9.3-18.3 2.7-17.5-9.5-33.7-27-36.3z" fill="#69a85a"/></svg>
<svg class="b" style="left:1091.59px;top:657.64px" width="28.93" height="28.93" viewBox="0 0 1024 1024"><path d="M908.1 353.1l-253.9-36.9L540.7 86.1c-3.1-6.3-8.2-11.4-14.5-14.5-15.8-7.8-35-1.3-42.9 14.5L369.8 316.2l-253.9 36.9c-7 1-13.4 4.3-18.3 9.3a32.05 32.05 0 00.6 45.3l183.7 179.1-43.4 252.9a31.95 31.95 0 0046.4 33.7L512 754l227.1 119.4c6.2 3.3 13.4 4.4 20.3 3.2 17.4-3 29.1-19.5 26.1-36.9l-43.4-252.9 183.7-179.1c5-4.9 8.3-11.3 9.3-18.3 2.7-17.5-9.5-33.7-27-36.3z" fill="#69a85a"/></svg>
<svg class="b" style="left:1125.89px;top:657.64px" width="28.93" height="28.93" viewBox="0 0 1024 1024"><path d="M908.1 353.1l-253.9-36.9L540.7 86.1c-3.1-6.3-8.2-11.4-14.5-14.5-15.8-7.8-35-1.3-42.9 14.5L369.8 316.2l-253.9 36.9c-7 1-13.4 4.3-18.3 9.3a32.05 32.05 0 00.6 45.3l183.7 179.1-43.4 252.9a31.95 31.95 0 0046.4 33.7L512 754l227.1 119.4c6.2 3.3 13.4 4.4 20.3 3.2 17.4-3 29.1-19.5 26.1-36.9l-43.4-252.9 183.7-179.1c5-4.9 8.3-11.3 9.3-18.3 2.7-17.5-9.5-33.7-27-36.3z" fill="#69a85a"/></svg>
<svg class="b" style="left:1160.19px;top:657.64px" width="28.93" height="28.93" viewBox="0 0 1024 1024"><path d="M908.1 353.1l-253.9-36.9L540.7 86.1c-3.1-6.3-8.2-11.4-14.5-14.5-15.8-7.8-35-1.3-42.9 14.5L369.8 316.2l-253.9 36.9c-7 1-13.4 4.3-18.3 9.3a32.05 32.05 0 00.6 45.3l183.7 179.1-43.4 252.9a31.95 31.95 0 0046.4 33.7L512 754l227.1 119.4c6.2 3.3 13.4 4.4 20.3 3.2 17.4-3 29.1-19.5 26.1-36.9l-43.4-252.9 183.7-179.1c5-4.9 8.3-11.3 9.3-18.3 2.7-17.5-9.5-33.7-27-36.3z" fill="#69a85a"/></svg>
<svg class="b" style="left:1194.49px;top:657.64px" width="28.93" height="28.93" viewBox="0 0 1024 1024"><path d="M908.1 353.1l-253.9-36.9L540.7 86.1c-3.1-6.3-8.2-11.4-14.5-14.5-15.8-7.8-35-1.3-42.9 14.5L369.8 316.2l-253.9 36.9c-7 1-13.4 4.3-18.3 9.3a32.05 32.05 0 00.6 45.3l183.7 179.1-43.4 252.9a31.95 31.95 0 0046.4 33.7L512 754l227.1 119.4c6.2 3.3 13.4 4.4 20.3 3.2 17.4-3 29.1-19.5 26.1-36.9l-43.4-252.9 183.7-179.1c5-4.9 8.3-11.3 9.3-18.3 2.7-17.5-9.5-33.7-27-36.3z" fill="#69a85a"/></svg>
<div class="t " style="left:1347.06px;top:659.65px;font-size:26px;color:#212121;font-weight:400;transform:scaleX(0.9393);transform-origin:0 0;">packed well looks nice no complaints</div>
<div class="b" style="left:3.00px;top:706.48px;width:2767.70px;height:67.62px;background:#f2f3f7;border-radius:10px"></div>
<div class="t " style="left:19.31px;top:727.27px;font-size:26px;color:#212121;font-weight:400;transform:scaleX(0.9958);transform-origin:0 0;">Pattch</div>
<div class="b" style="left:648px;top:724.38px;width:36px;height:36px"><svg width="36" height="36" viewBox="0 0 36 36"><defs><clipPath id="fc"><circle cx="18" cy="18" r="18"/></clipPath></defs><g clip-path="url(#fc)"><rect width="36" height="36" fill="#fff"/><rect y="0.00" width="36" height="2.77" fill="#b1333b"/><rect y="5.54" width="36" height="2.77" fill="#b1333b"/><rect y="11.08" width="36" height="2.77" fill="#b1333b"/><rect y="16.62" width="36" height="2.77" fill="#b1333b"/><rect y="22.15" width="36" height="2.77" fill="#b1333b"/><rect y="27.69" width="36" height="2.77" fill="#b1333b"/><rect y="33.23" width="36" height="2.77" fill="#b1333b"/><rect width="18.2" height="19.4" fill="#1c2d62"/><circle cx="1.70" cy="1.60" r="0.5" fill="#fff"/><circle cx="4.70" cy="1.60" r="0.5" fill="#fff"/><circle cx="7.70" cy="1.60" r="0.5" fill="#fff"/><circle cx="10.70" cy="1.60" r="0.5" fill="#fff"/><circle cx="13.70" cy="1.60" r="0.5" fill="#fff"/><circle cx="16.70" cy="1.60" r="0.5" fill="#fff"/><circle cx="3.20" cy="3.65" r="0.5" fill="#fff"/><circle cx="6.20" cy="3.65" r="0.5" fill="#fff"/><circle cx="9.20" cy="3.65" r="0.5" fill="#fff"/><circle cx="12.20" cy="3.65" r="0.5" fill="#fff"/><circle cx="15.20" cy="3.65" r="0.5" fill="#fff"/><circle cx="1.70" cy="5.70" r="0.5" fill="#fff"/><circle cx="4.70" cy="5.70" r="0.5" fill="#fff"/><circle cx="7.70" cy="5.70" r="0.5" fill="#fff"/><circle cx="10.70" cy="5.70" r="0.5" fill="#fff"/><circle cx="13.70" cy="5.70" r="0.5" fill="#fff"/><circle cx="16.70" cy="5.70" r="0.5" fill="#fff"/><circle cx="3.20" cy="7.75" r="0.5" fill="#fff"/><circle cx="6.20" cy="7.75" r="0.5" fill="#fff"/><circle cx="9.20" cy="7.75" r="0.5" fill="#fff"/><circle cx="12.20" cy="7.75" r="0.5" fill="#fff"/><circle cx="15.20" cy="7.75" r="0.5" fill="#fff"/><circle cx="1.70" cy="9.80" r="0.5" fill="#fff"/><circle cx="4.70" cy="9.80" r="0.5" fill="#fff"/><circle cx="7.70" cy="9.80" r="0.5" fill="#fff"/><circle cx="10.70" cy="9.80" r="0.5" fill="#fff"/><circle cx="13.70" cy="9.80" r="0.5" fill="#fff"/><circle cx="16.70" cy="9.80" r="0.5" fill="#fff"/><circle cx="3.20" cy="11.85" r="0.5" fill="#fff"/><circle cx="6.20" cy="11.85" r="0.5" fill="#fff"/><circle cx="9.20" cy="11.85" r="0.5" fill="#fff"/><circle cx="12.20" cy="11.85" r="0.5" fill="#fff"/><circle cx="15.20" cy="11.85" r="0.5" fill="#fff"/><circle cx="1.70" cy="13.90" r="0.5" fill="#fff"/><circle cx="4.70" cy="13.90" r="0.5" fill="#fff"/><circle cx="7.70" cy="13.90" r="0.5" fill="#fff"/><circle cx="10.70" cy="13.90" r="0.5" fill="#fff"/><circle cx="13.70" cy="13.90" r="0.5" fill="#fff"/><circle cx="16.70" cy="13.90" r="0.5" fill="#fff"/><circle cx="3.20" cy="15.95" r="0.5" fill="#fff"/><circle cx="6.20" cy="15.95" r="0.5" fill="#fff"/><circle cx="9.20" cy="15.95" r="0.5" fill="#fff"/><circle cx="12.20" cy="15.95" r="0.5" fill="#fff"/><circle cx="15.20" cy="15.95" r="0.5" fill="#fff"/><circle cx="1.70" cy="18.00" r="0.5" fill="#fff"/><circle cx="4.70" cy="18.00" r="0.5" fill="#fff"/><circle cx="7.70" cy="18.00" r="0.5" fill="#fff"/><circle cx="10.70" cy="18.00" r="0.5" fill="#fff"/><circle cx="13.70" cy="18.00" r="0.5" fill="#fff"/><circle cx="16.70" cy="18.00" r="0.5" fill="#fff"/></g></svg></div>
<div class="t " style="left:770.75px;top:727.27px;font-size:26px;color:#212121;font-weight:400;transform:scaleX(0.9514);transform-origin:0 0;">29 Dec 2025</div>
<svg class="b" style="left:1057.29px;top:725.26px" width="28.93" height="28.93" viewBox="0 0 1024 1024"><path d="M908.1 353.1l-253.9-36.9L540.7 86.1c-3.1-6.3-8.2-11.4-14.5-14.5-15.8-7.8-35-1.3-42.9 14.5L369.8 316.2l-253.9 36.9c-7 1-13.4 4.3-18.3 9.3a32.05 32.05 0 00.6 45.3l183.7 179.1-43.4 252.9a31.95 31.95 0 0046.4 33.7L512 754l227.1 119.4c6.2 3.3 13.4 4.4 20.3 3.2 17.4-3 29.1-19.5 26.1-36.9l-43.4-252.9 183.7-179.1c5-4.9 8.3-11.3 9.3-18.3 2.7-17.5-9.5-33.7-27-36.3z" fill="#cd4f47"/></svg>
<svg class="b" style="left:1091.59px;top:725.26px" width="28.93" height="28.93" viewBox="0 0 1024 1024"><path d="M908.1 353.1l-253.9-36.9L540.7 86.1c-3.1-6.3-8.2-11.4-14.5-14.5-15.8-7.8-35-1.3-42.9 14.5L369.8 316.2l-253.9 36.9c-7 1-13.4 4.3-18.3 9.3a32.05 32.05 0 00.6 45.3l183.7 179.1-43.4 252.9a31.95 31.95 0 0046.4 33.7L512 754l227.1 119.4c6.2 3.3 13.4 4.4 20.3 3.2 17.4-3 29.1-19.5 26.1-36.9l-43.4-252.9 183.7-179.1c5-4.9 8.3-11.3 9.3-18.3 2.7-17.5-9.5-33.7-27-36.3zM664.8 561.6l36.1 210.3L512 672.7 323.1 772l36.1-210.3-152.8-149L417.6 382 512 190.7 606.4 382l211.2 30.7-152.8 148.9z" fill="#c4c4c4" fill-rule="nonzero"/></svg>
<svg class="b" style="left:1125.89px;top:725.26px" width="28.93" height="28.93" viewBox="0 0 1024 1024"><path d="M908.1 353.1l-253.9-36.9L540.7 86.1c-3.1-6.3-8.2-11.4-14.5-14.5-15.8-7.8-35-1.3-42.9 14.5L369.8 316.2l-253.9 36.9c-7 1-13.4 4.3-18.3 9.3a32.05 32.05 0 00.6 45.3l183.7 179.1-43.4 252.9a31.95 31.95 0 0046.4 33.7L512 754l227.1 119.4c6.2 3.3 13.4 4.4 20.3 3.2 17.4-3 29.1-19.5 26.1-36.9l-43.4-252.9 183.7-179.1c5-4.9 8.3-11.3 9.3-18.3 2.7-17.5-9.5-33.7-27-36.3zM664.8 561.6l36.1 210.3L512 672.7 323.1 772l36.1-210.3-152.8-149L417.6 382 512 190.7 606.4 382l211.2 30.7-152.8 148.9z" fill="#c4c4c4" fill-rule="nonzero"/></svg>
<svg class="b" style="left:1160.19px;top:725.26px" width="28.93" height="28.93" viewBox="0 0 1024 1024"><path d="M908.1 353.1l-253.9-36.9L540.7 86.1c-3.1-6.3-8.2-11.4-14.5-14.5-15.8-7.8-35-1.3-42.9 14.5L369.8 316.2l-253.9 36.9c-7 1-13.4 4.3-18.3 9.3a32.05 32.05 0 00.6 45.3l183.7 179.1-43.4 252.9a31.95 31.95 0 0046.4 33.7L512 754l227.1 119.4c6.2 3.3 13.4 4.4 20.3 3.2 17.4-3 29.1-19.5 26.1-36.9l-43.4-252.9 183.7-179.1c5-4.9 8.3-11.3 9.3-18.3 2.7-17.5-9.5-33.7-27-36.3zM664.8 561.6l36.1 210.3L512 672.7 323.1 772l36.1-210.3-152.8-149L417.6 382 512 190.7 606.4 382l211.2 30.7-152.8 148.9z" fill="#c4c4c4" fill-rule="nonzero"/></svg>
<svg class="b" style="left:1194.49px;top:725.26px" width="28.93" height="28.93" viewBox="0 0 1024 1024"><path d="M908.1 353.1l-253.9-36.9L540.7 86.1c-3.1-6.3-8.2-11.4-14.5-14.5-15.8-7.8-35-1.3-42.9 14.5L369.8 316.2l-253.9 36.9c-7 1-13.4 4.3-18.3 9.3a32.05 32.05 0 00.6 45.3l183.7 179.1-43.4 252.9a31.95 31.95 0 0046.4 33.7L512 754l227.1 119.4c6.2 3.3 13.4 4.4 20.3 3.2 17.4-3 29.1-19.5 26.1-36.9l-43.4-252.9 183.7-179.1c5-4.9 8.3-11.3 9.3-18.3 2.7-17.5-9.5-33.7-27-36.3zM664.8 561.6l36.1 210.3L512 672.7 323.1 772l36.1-210.3-152.8-149L417.6 382 512 190.7 606.4 382l211.2 30.7-152.8 148.9z" fill="#c4c4c4" fill-rule="nonzero"/></svg>
<div class="t " style="left:1346.07px;top:727.27px;font-size:26px;color:#212121;font-weight:400;transform:scaleX(0.9646);transform-origin:0 0;">Never received.</div>
<div class="b" style="left:1347.50px;top:739.08px;width:172.20px;height:2.10px;background:#141414"></div>
<div class="b" style="left:2716px;top:715.68px;width:49px;height:49px;border-radius:50%;background:rgba(0,0,0,0.012)"></div>
<div class="b" style="left:2727.5px;top:726.98px;width:26px;height:26px"><svg width="26" height="26" viewBox="0 0 26 26"><circle cx="13" cy="13" r="12.6" fill="#0f2d4e"/><text x="0" y="0" transform="translate(7.6,16.9) scale(0.8,1)" font-family="Liberation Sans" font-weight="700" font-size="21.5" fill="#fff">a</text><path d="M5.6 17.6 Q12.6 22.4 19.6 17.2" fill="none" stroke="#f0a22e" stroke-width="1.6" stroke-linecap="round"/><path d="M17.8 16.9 L19.9 17.0 L19.7 19.0" fill="none" stroke="#f0a22e" stroke-width="1.2" stroke-linecap="round" stroke-linejoin="round"/></svg></div>
<div class="t " style="left:19.38px;top:794.89px;font-size:26px;color:#212121;font-weight:400;transform:scaleX(0.9609);transform-origin:0 0;">Lizzie</div>
<div class="b" style="left:648px;top:792.00px;width:36px;height:36px"><svg width="36" height="36" viewBox="0 0 36 36"><defs><clipPath id="fc"><circle cx="18" cy="18" r="18"/></clipPath></defs><g clip-path="url(#fc)"><rect width="36" height="36" fill="#fff"/><rect y="0.00" width="36" height="2.77" fill="#b1333b"/><rect y="5.54" width="36" height="2.77" fill="#b1333b"/><rect y="11.08" width="36" height="2.77" fill="#b1333b"/><rect y="16.62" width="36" height="2.77" fill="#b1333b"/><rect y="22.15" width="36" height="2.77" fill="#b1333b"/><rect y="27.69" width="36" height="2.77" fill="#b1333b"/><rect y="33.23" width="36" height="2.77" fill="#b1333b"/><rect width="18.2" height="19.4" fill="#1c2d62"/><circle cx="1.70" cy="1.60" r="0.5" fill="#fff"/><circle cx="4.70" cy="1.60" r="0.5" fill="#fff"/><circle cx="7.70" cy="1.60" r="0.5" fill="#fff"/><circle cx="10.70" cy="1.60" r="0.5" fill="#fff"/><circle cx="13.70" cy="1.60" r="0.5" fill="#fff"/><circle cx="16.70" cy="1.60" r="0.5" fill="#fff"/><circle cx="3.20" cy="3.65" r="0.5" fill="#fff"/><circle cx="6.20" cy="3.65" r="0.5" fill="#fff"/><circle cx="9.20" cy="3.65" r="0.5" fill="#fff"/><circle cx="12.20" cy="3.65" r="0.5" fill="#fff"/><circle cx="15.20" cy="3.65" r="0.5" fill="#fff"/><circle cx="1.70" cy="5.70" r="0.5" fill="#fff"/><circle cx="4.70" cy="5.70" r="0.5" fill="#fff"/><circle cx="7.70" cy="5.70" r="0.5" fill="#fff"/><circle cx="10.70" cy="5.70" r="0.5" fill="#fff"/><circle cx="13.70" cy="5.70" r="0.5" fill="#fff"/><circle cx="16.70" cy="5.70" r="0.5" fill="#fff"/><circle cx="3.20" cy="7.75" r="0.5" fill="#fff"/><circle cx="6.20" cy="7.75" r="0.5" fill="#fff"/><circle cx="9.20" cy="7.75" r="0.5" fill="#fff"/><circle cx="12.20" cy="7.75" r="0.5" fill="#fff"/><circle cx="15.20" cy="7.75" r="0.5" fill="#fff"/><circle cx="1.70" cy="9.80" r="0.5" fill="#fff"/><circle cx="4.70" cy="9.80" r="0.5" fill="#fff"/><circle cx="7.70" cy="9.80" r="0.5" fill="#fff"/><circle cx="10.70" cy="9.80" r="0.5" fill="#fff"/><circle cx="13.70" cy="9.80" r="0.5" fill="#fff"/><circle cx="16.70" cy="9.80" r="0.5" fill="#fff"/><circle cx="3.20" cy="11.85" r="0.5" fill="#fff"/><circle cx="6.20" cy="11.85" r="0.5" fill="#fff"/><circle cx="9.20" cy="11.85" r="0.5" fill="#fff"/><circle cx="12.20" cy="11.85" r="0.5" fill="#fff"/><circle cx="15.20" cy="11.85" r="0.5" fill="#fff"/><circle cx="1.70" cy="13.90" r="0.5" fill="#fff"/><circle cx="4.70" cy="13.90" r="0.5" fill="#fff"/><circle cx="7.70" cy="13.90" r="0.5" fill="#fff"/><circle cx="10.70" cy="13.90" r="0.5" fill="#fff"/><circle cx="13.70" cy="13.90" r="0.5" fill="#fff"/><circle cx="16.70" cy="13.90" r="0.5" fill="#fff"/><circle cx="3.20" cy="15.95" r="0.5" fill="#fff"/><circle cx="6.20" cy="15.95" r="0.5" fill="#fff"/><circle cx="9.20" cy="15.95" r="0.5" fill="#fff"/><circle cx="12.20" cy="15.95" r="0.5" fill="#fff"/><circle cx="15.20" cy="15.95" r="0.5" fill="#fff"/><circle cx="1.70" cy="18.00" r="0.5" fill="#fff"/><circle cx="4.70" cy="18.00" r="0.5" fill="#fff"/><circle cx="7.70" cy="18.00" r="0.5" fill="#fff"/><circle cx="10.70" cy="18.00" r="0.5" fill="#fff"/><circle cx="13.70" cy="18.00" r="0.5" fill="#fff"/><circle cx="16.70" cy="18.00" r="0.5" fill="#fff"/></g></svg></div>
<div class="t " style="left:770.75px;top:794.89px;font-size:26px;color:#212121;font-weight:400;transform:scaleX(0.9514);transform-origin:0 0;">27 Dec 2025</div>
<svg class="b" style="left:1057.29px;top:792.88px" width="28.93" height="28.93" viewBox="0 0 1024 1024"><path d="M908.1 353.1l-253.9-36.9L540.7 86.1c-3.1-6.3-8.2-11.4-14.5-14.5-15.8-7.8-35-1.3-42.9 14.5L369.8 316.2l-253.9 36.9c-7 1-13.4 4.3-18.3 9.3a32.05 32.05 0 00.6 45.3l183.7 179.1-43.4 252.9a31.95 31.95 0 0046.4 33.7L512 754l227.1 119.4c6.2 3.3 13.4 4.4 20.3 3.2 17.4-3 29.1-19.5 26.1-36.9l-43.4-252.9 183.7-179.1c5-4.9 8.3-11.3 9.3-18.3 2.7-17.5-9.5-33.7-27-36.3z" fill="#69a85a"/></svg>
<svg class="b" style="left:1091.59px;top:792.88px" width="28.93" height="28.93" viewBox="0 0 1024 1024"><path d="M908.1 353.1l-253.9-36.9L540.7 86.1c-3.1-6.3-8.2-11.4-14.5-14.5-15.8-7.8-35-1.3-42.9 14.5L369.8 316.2l-253.9 36.9c-7 1-13.4 4.3-18.3 9.3a32.05 32.05 0 00.6 45.3l183.7 179.1-43.4 252.9a31.95 31.95 0 0046.4 33.7L512 754l227.1 119.4c6.2 3.3 13.4 4.4 20.3 3.2 17.4-3 29.1-19.5 26.1-36.9l-43.4-252.9 183.7-179.1c5-4.9 8.3-11.3 9.3-18.3 2.7-17.5-9.5-33.7-27-36.3z" fill="#69a85a"/></svg>
<svg class="b" style="left:1125.89px;top:792.88px" width="28.93" height="28.93" viewBox="0 0 1024 1024"><path d="M908.1 353.1l-253.9-36.9L540.7 86.1c-3.1-6.3-8.2-11.4-14.5-14.5-15.8-7.8-35-1.3-42.9 14.5L369.8 316.2l-253.9 36.9c-7 1-13.4 4.3-18.3 9.3a32.05 32.05 0 00.6 45.3l183.7 179.1-43.4 252.9a31.95 31.95 0 0046.4 33.7L512 754l227.1 119.4c6.2 3.3 13.4 4.4 20.3 3.2 17.4-3 29.1-19.5 26.1-36.9l-43.4-252.9 183.7-179.1c5-4.9 8.3-11.3 9.3-18.3 2.7-17.5-9.5-33.7-27-36.3z" fill="#69a85a"/></svg>
<svg class="b" style="left:1160.19px;top:792.88px" width="28.93" height="28.93" viewBox="0 0 1024 1024"><path d="M908.1 353.1l-253.9-36.9L540.7 86.1c-3.1-6.3-8.2-11.4-14.5-14.5-15.8-7.8-35-1.3-42.9 14.5L369.8 316.2l-253.9 36.9c-7 1-13.4 4.3-18.3 9.3a32.05 32.05 0 00.6 45.3l183.7 179.1-43.4 252.9a31.95 31.95 0 0046.4 33.7L512 754l227.1 119.4c6.2 3.3 13.4 4.4 20.3 3.2 17.4-3 29.1-19.5 26.1-36.9l-43.4-252.9 183.7-179.1c5-4.9 8.3-11.3 9.3-18.3 2.7-17.5-9.5-33.7-27-36.3z" fill="#69a85a"/></svg>
<svg class="b" style="left:1194.49px;top:792.88px" width="28.93" height="28.93" viewBox="0 0 1024 1024"><path d="M908.1 353.1l-253.9-36.9L540.7 86.1c-3.1-6.3-8.2-11.4-14.5-14.5-15.8-7.8-35-1.3-42.9 14.5L369.8 316.2l-253.9 36.9c-7 1-13.4 4.3-18.3 9.3a32.05 32.05 0 00.6 45.3l183.7 179.1-43.4 252.9a31.95 31.95 0 0046.4 33.7L512 754l227.1 119.4c6.2 3.3 13.4 4.4 20.3 3.2 17.4-3 29.1-19.5 26.1-36.9l-43.4-252.9 183.7-179.1c5-4.9 8.3-11.3 9.3-18.3 2.7-17.5-9.5-33.7-27-36.3z" fill="#69a85a"/></svg>
<div class="t " style="left:1346.12px;top:794.89px;font-size:26px;color:#212121;font-weight:400;transform:scaleX(0.9381);transform-origin:0 0;">Excellent napkins! I ordered these last year but needed more for Christmas Eve. As my list of guests grew I ordered more the…</div>
<div class="b" style="left:3.00px;top:841.72px;width:2767.70px;height:67.62px;background:#f2f3f7;border-radius:10px"></div>
<div class="t " style="left:20.34px;top:862.51px;font-size:26px;color:#212121;font-weight:400;transform:scaleX(0.9636);transform-origin:0 0;">chandler</div>
<div class="b" style="left:648px;top:859.62px;width:36px;height:36px"><svg width="36" height="36" viewBox="0 0 36 36"><defs><clipPath id="fc"><circle cx="18" cy="18" r="18"/></clipPath></defs><g clip-path="url(#fc)"><rect width="36" height="36" fill="#fff"/><rect y="0.00" width="36" height="2.77" fill="#b1333b"/><rect y="5.54" width="36" height="2.77" fill="#b1333b"/><rect y="11.08" width="36" height="2.77" fill="#b1333b"/><rect y="16.62" width="36" height="2.77" fill="#b1333b"/><rect y="22.15" width="36" height="2.77" fill="#b1333b"/><rect y="27.69" width="36" height="2.77" fill="#b1333b"/><rect y="33.23" width="36" height="2.77" fill="#b1333b"/><rect width="18.2" height="19.4" fill="#1c2d62"/><circle cx="1.70" cy="1.60" r="0.5" fill="#fff"/><circle cx="4.70" cy="1.60" r="0.5" fill="#fff"/><circle cx="7.70" cy="1.60" r="0.5" fill="#fff"/><circle cx="10.70" cy="1.60" r="0.5" fill="#fff"/><circle cx="13.70" cy="1.60" r="0.5" fill="#fff"/><circle cx="16.70" cy="1.60" r="0.5" fill="#fff"/><circle cx="3.20" cy="3.65" r="0.5" fill="#fff"/><circle cx="6.20" cy="3.65" r="0.5" fill="#fff"/><circle cx="9.20" cy="3.65" r="0.5" fill="#fff"/><circle cx="12.20" cy="3.65" r="0.5" fill="#fff"/><circle cx="15.20" cy="3.65" r="0.5" fill="#fff"/><circle cx="1.70" cy="5.70" r="0.5" fill="#fff"/><circle cx="4.70" cy="5.70" r="0.5" fill="#fff"/><circle cx="7.70" cy="5.70" r="0.5" fill="#fff"/><circle cx="10.70" cy="5.70" r="0.5" fill="#fff"/><circle cx="13.70" cy="5.70" r="0.5" fill="#fff"/><circle cx="16.70" cy="5.70" r="0.5" fill="#fff"/><circle cx="3.20" cy="7.75" r="0.5" fill="#fff"/><circle cx="6.20" cy="7.75" r="0.5" fill="#fff"/><circle cx="9.20" cy="7.75" r="0.5" fill="#fff"/><circle cx="12.20" cy="7.75" r="0.5" fill="#fff"/><circle cx="15.20" cy="7.75" r="0.5" fill="#fff"/><circle cx="1.70" cy="9.80" r="0.5" fill="#fff"/><circle cx="4.70" cy="9.80" r="0.5" fill="#fff"/><circle cx="7.70" cy="9.80" r="0.5" fill="#fff"/><circle cx="10.70" cy="9.80" r="0.5" fill="#fff"/><circle cx="13.70" cy="9.80" r="0.5" fill="#fff"/><circle cx="16.70" cy="9.80" r="0.5" fill="#fff"/><circle cx="3.20" cy="11.85" r="0.5" fill="#fff"/><circle cx="6.20" cy="11.85" r="0.5" fill="#fff"/><circle cx="9.20" cy="11.85" r="0.5" fill="#fff"/><circle cx="12.20" cy="11.85" r="0.5" fill="#fff"/><circle cx="15.20" cy="11.85" r="0.5" fill="#fff"/><circle cx="1.70" cy="13.90" r="0.5" fill="#fff"/><circle cx="4.70" cy="13.90" r="0.5" fill="#fff"/><circle cx="7.70" cy="13.90" r="0.5" fill="#fff"/><circle cx="10.70" cy="13.90" r="0.5" fill="#fff"/><circle cx="13.70" cy="13.90" r="0.5" fill="#fff"/><circle cx="16.70" cy="13.90" r="0.5" fill="#fff"/><circle cx="3.20" cy="15.95" r="0.5" fill="#fff"/><circle cx="6.20" cy="15.95" r="0.5" fill="#fff"/><circle cx="9.20" cy="15.95" r="0.5" fill="#fff"/><circle cx="12.20" cy="15.95" r="0.5" fill="#fff"/><circle cx="15.20" cy="15.95" r="0.5" fill="#fff"/><circle cx="1.70" cy="18.00" r="0.5" fill="#fff"/><circle cx="4.70" cy="18.00" r="0.5" fill="#fff"/><circle cx="7.70" cy="18.00" r="0.5" fill="#fff"/><circle cx="10.70" cy="18.00" r="0.5" fill="#fff"/><circle cx="13.70" cy="18.00" r="0.5" fill="#fff"/><circle cx="16.70" cy="18.00" r="0.5" fill="#fff"/></g></svg></div>
<div class="t " style="left:770.75px;top:862.51px;font-size:26px;color:#212121;font-weight:400;transform:scaleX(0.9514);transform-origin:0 0;">26 Dec 2025</div>
<svg class="b" style="left:1057.29px;top:860.50px" width="28.93" height="28.93" viewBox="0 0 1024 1024"><path d="M908.1 353.1l-253.9-36.9L540.7 86.1c-3.1-6.3-8.2-11.4-14.5-14.5-15.8-7.8-35-1.3-42.9 14.5L369.8 316.2l-253.9 36.9c-7 1-13.4 4.3-18.3 9.3a32.05 32.05 0 00.6 45.3l183.7 179.1-43.4 252.9a31.95 31.95 0 0046.4 33.7L512 754l227.1 119.4c6.2 3.3 13.4 4.4 20.3 3.2 17.4-3 29.1-19.5 26.1-36.9l-43.4-252.9 183.7-179.1c5-4.9 8.3-11.3 9.3-18.3 2.7-17.5-9.5-33.7-27-36.3z" fill="#69a85a"/></svg>
<svg class="b" style="left:1091.59px;top:860.50px" width="28.93" height="28.93" viewBox="0 0 1024 1024"><path d="M908.1 353.1l-253.9-36.9L540.7 86.1c-3.1-6.3-8.2-11.4-14.5-14.5-15.8-7.8-35-1.3-42.9 14.5L369.8 316.2l-253.9 36.9c-7 1-13.4 4.3-18.3 9.3a32.05 32.05 0 00.6 45.3l183.7 179.1-43.4 252.9a31.95 31.95 0 0046.4 33.7L512 754l227.1 119.4c6.2 3.3 13.4 4.4 20.3 3.2 17.4-3 29.1-19.5 26.1-36.9l-43.4-252.9 183.7-179.1c5-4.9 8.3-11.3 9.3-18.3 2.7-17.5-9.5-33.7-27-36.3z" fill="#69a85a"/></svg>
<svg class="b" style="left:1125.89px;top:860.50px" width="28.93" height="28.93" viewBox="0 0 1024 1024"><path d="M908.1 353.1l-253.9-36.9L540.7 86.1c-3.1-6.3-8.2-11.4-14.5-14.5-15.8-7.8-35-1.3-42.9 14.5L369.8 316.2l-253.9 36.9c-7 1-13.4 4.3-18.3 9.3a32.05 32.05 0 00.6 45.3l183.7 179.1-43.4 252.9a31.95 31.95 0 0046.4 33.7L512 754l227.1 119.4c6.2 3.3 13.4 4.4 20.3 3.2 17.4-3 29.1-19.5 26.1-36.9l-43.4-252.9 183.7-179.1c5-4.9 8.3-11.3 9.3-18.3 2.7-17.5-9.5-33.7-27-36.3z" fill="#69a85a"/></svg>
<svg class="b" style="left:1160.19px;top:860.50px" width="28.93" height="28.93" viewBox="0 0 1024 1024"><path d="M908.1 353.1l-253.9-36.9L540.7 86.1c-3.1-6.3-8.2-11.4-14.5-14.5-15.8-7.8-35-1.3-42.9 14.5L369.8 316.2l-253.9 36.9c-7 1-13.4 4.3-18.3 9.3a32.05 32.05 0 00.6 45.3l183.7 179.1-43.4 252.9a31.95 31.95 0 0046.4 33.7L512 754l227.1 119.4c6.2 3.3 13.4 4.4 20.3 3.2 17.4-3 29.1-19.5 26.1-36.9l-43.4-252.9 183.7-179.1c5-4.9 8.3-11.3 9.3-18.3 2.7-17.5-9.5-33.7-27-36.3z" fill="#69a85a"/></svg>
<svg class="b" style="left:1194.49px;top:860.50px" width="28.93" height="28.93" viewBox="0 0 1024 1024"><path d="M908.1 353.1l-253.9-36.9L540.7 86.1c-3.1-6.3-8.2-11.4-14.5-14.5-15.8-7.8-35-1.3-42.9 14.5L369.8 316.2l-253.9 36.9c-7 1-13.4 4.3-18.3 9.3a32.05 32.05 0 00.6 45.3l183.7 179.1-43.4 252.9a31.95 31.95 0 0046.4 33.7L512 754l227.1 119.4c6.2 3.3 13.4 4.4 20.3 3.2 17.4-3 29.1-19.5 26.1-36.9l-43.4-252.9 183.7-179.1c5-4.9 8.3-11.3 9.3-18.3 2.7-17.5-9.5-33.7-27-36.3z" fill="#69a85a"/></svg>
<div class="t " style="left:1347.02px;top:862.51px;font-size:26px;color:#212121;font-weight:400;transform:scaleX(0.9818);transform-origin:0 0;">Great !</div>
<div class="t " style="left:19.30px;top:930.13px;font-size:26px;color:#212121;font-weight:400;transform:scaleX(1.0000);transform-origin:0 0;">Bryan</div>
<div class="b" style="left:648px;top:927.24px;width:36px;height:36px"><svg width="36" height="36" viewBox="0 0 36 36"><defs><clipPath id="fc"><circle cx="18" cy="18" r="18"/></clipPath></defs><g clip-path="url(#fc)"><rect width="36" height="36" fill="#fff"/><rect y="0.00" width="36" height="2.77" fill="#b1333b"/><rect y="5.54" width="36" height="2.77" fill="#b1333b"/><rect y="11.08" width="36" height="2.77" fill="#b1333b"/><rect y="16.62" width="36" height="2.77" fill="#b1333b"/><rect y="22.15" width="36" height="2.77" fill="#b1333b"/><rect y="27.69" width="36" height="2.77" fill="#b1333b"/><rect y="33.23" width="36" height="2.77" fill="#b1333b"/><rect width="18.2" height="19.4" fill="#1c2d62"/><circle cx="1.70" cy="1.60" r="0.5" fill="#fff"/><circle cx="4.70" cy="1.60" r="0.5" fill="#fff"/><circle cx="7.70" cy="1.60" r="0.5" fill="#fff"/><circle cx="10.70" cy="1.60" r="0.5" fill="#fff"/><circle cx="13.70" cy="1.60" r="0.5" fill="#fff"/><circle cx="16.70" cy="1.60" r="0.5" fill="#fff"/><circle cx="3.20" cy="3.65" r="0.5" fill="#fff"/><circle cx="6.20" cy="3.65" r="0.5" fill="#fff"/><circle cx="9.20" cy="3.65" r="0.5" fill="#fff"/><circle cx="12.20" cy="3.65" r="0.5" fill="#fff"/><circle cx="15.20" cy="3.65" r="0.5" fill="#fff"/><circle cx="1.70" cy="5.70" r="0.5" fill="#fff"/><circle cx="4.70" cy="5.70" r="0.5" fill="#fff"/><circle cx="7.70" cy="5.70" r="0.5" fill="#fff"/><circle cx="10.70" cy="5.70" r="0.5" fill="#fff"/><circle cx="13.70" cy="5.70" r="0.5" fill="#fff"/><circle cx="16.70" cy="5.70" r="0.5" fill="#fff"/><circle cx="3.20" cy="7.75" r="0.5" fill="#fff"/><circle cx="6.20" cy="7.75" r="0.5" fill="#fff"/><circle cx="9.20" cy="7.75" r="0.5" fill="#fff"/><circle cx="12.20" cy="7.75" r="0.5" fill="#fff"/><circle cx="15.20" cy="7.75" r="0.5" fill="#fff"/><circle cx="1.70" cy="9.80" r="0.5" fill="#fff"/><circle cx="4.70" cy="9.80" r="0.5" fill="#fff"/><circle cx="7.70" cy="9.80" r="0.5" fill="#fff"/><circle cx="10.70" cy="9.80" r="0.5" fill="#fff"/><circle cx="13.70" cy="9.80" r="0.5" fill="#fff"/><circle cx="16.70" cy="9.80" r="0.5" fill="#fff"/><circle cx="3.20" cy="11.85" r="0.5" fill="#fff"/><circle cx="6.20" cy="11.85" r="0.5" fill="#fff"/><circle cx="9.20" cy="11.85" r="0.5" fill="#fff"/><circle cx="12.20" cy="11.85" r="0.5" fill="#fff"/><circle cx="15.20" cy="11.85" r="0.5" fill="#fff"/><circle cx="1.70" cy="13.90" r="0.5" fill="#fff"/><circle cx="4.70" cy="13.90" r="0.5" fill="#fff"/><circle cx="7.70" cy="13.90" r="0.5" fill="#fff"/><circle cx="10.70" cy="13.90" r="0.5" fill="#fff"/><circle cx="13.70" cy="13.90" r="0.5" fill="#fff"/><circle cx="16.70" cy="13.90" r="0.5" fill="#fff"/><circle cx="3.20" cy="15.95" r="0.5" fill="#fff"/><circle cx="6.20" cy="15.95" r="0.5" fill="#fff"/><circle cx="9.20" cy="15.95" r="0.5" fill="#fff"/><circle cx="12.20" cy="15.95" r="0.5" fill="#fff"/><circle cx="15.20" cy="15.95" r="0.5" fill="#fff"/><circle cx="1.70" cy="18.00" r="0.5" fill="#fff"/><circle cx="4.70" cy="18.00" r="0.5" fill="#fff"/><circle cx="7.70" cy="18.00" r="0.5" fill="#fff"/><circle cx="10.70" cy="18.00" r="0.5" fill="#fff"/><circle cx="13.70" cy="18.00" r="0.5" fill="#fff"/><circle cx="16.70" cy="18.00" r="0.5" fill="#fff"/></g></svg></div>
<div class="t " style="left:770.75px;top:930.13px;font-size:26px;color:#212121;font-weight:400;transform:scaleX(0.9514);transform-origin:0 0;">24 Dec 2025</div>
<svg class="b" style="left:1057.29px;top:928.12px" width="28.93" height="28.93" viewBox="0 0 1024 1024"><path d="M908.1 353.1l-253.9-36.9L540.7 86.1c-3.1-6.3-8.2-11.4-14.5-14.5-15.8-7.8-35-1.3-42.9 14.5L369.8 316.2l-253.9 36.9c-7 1-13.4 4.3-18.3 9.3a32.05 32.05 0 00.6 45.3l183.7 179.1-43.4 252.9a31.95 31.95 0 0046.4 33.7L512 754l227.1 119.4c6.2 3.3 13.4 4.4 20.3 3.2 17.4-3 29.1-19.5 26.1-36.9l-43.4-252.9 183.7-179.1c5-4.9 8.3-11.3 9.3-18.3 2.7-17.5-9.5-33.7-27-36.3z" fill="#69a85a"/></svg>
<svg class="b" style="left:1091.59px;top:928.12px" width="28.93" height="28.93" viewBox="0 0 1024 1024"><path d="M908.1 353.1l-253.9-36.9L540.7 86.1c-3.1-6.3-8.2-11.4-14.5-14.5-15.8-7.8-35-1.3-42.9 14.5L369.8 316.2l-253.9 36.9c-7 1-13.4 4.3-18.3 9.3a32.05 32.05 0 00.6 45.3l183.7 179.1-43.4 252.9a31.95 31.95 0 0046.4 33.7L512 754l227.1 119.4c6.2 3.3 13.4 4.4 20.3 3.2 17.4-3 29.1-19.5 26.1-36.9l-43.4-252.9 183.7-179.1c5-4.9 8.3-11.3 9.3-18.3 2.7-17.5-9.5-33.7-27-36.3z" fill="#69a85a"/></svg>
<svg class="b" style="left:1125.89px;top:928.12px" width="28.93" height="28.93" viewBox="0 0 1024 1024"><path d="M908.1 353.1l-253.9-36.9L540.7 86.1c-3.1-6.3-8.2-11.4-14.5-14.5-15.8-7.8-35-1.3-42.9 14.5L369.8 316.2l-253.9 36.9c-7 1-13.4 4.3-18.3 9.3a32.05 32.05 0 00.6 45.3l183.7 179.1-43.4 252.9a31.95 31.95 0 0046.4 33.7L512 754l227.1 119.4c6.2 3.3 13.4 4.4 20.3 3.2 17.4-3 29.1-19.5 26.1-36.9l-43.4-252.9 183.7-179.1c5-4.9 8.3-11.3 9.3-18.3 2.7-17.5-9.5-33.7-27-36.3z" fill="#69a85a"/></svg>
<svg class="b" style="left:1160.19px;top:928.12px" width="28.93" height="28.93" viewBox="0 0 1024 1024"><path d="M908.1 353.1l-253.9-36.9L540.7 86.1c-3.1-6.3-8.2-11.4-14.5-14.5-15.8-7.8-35-1.3-42.9 14.5L369.8 316.2l-253.9 36.9c-7 1-13.4 4.3-18.3 9.3a32.05 32.05 0 00.6 45.3l183.7 179.1-43.4 252.9a31.95 31.95 0 0046.4 33.7L512 754l227.1 119.4c6.2 3.3 13.4 4.4 20.3 3.2 17.4-3 29.1-19.5 26.1-36.9l-43.4-252.9 183.7-179.1c5-4.9 8.3-11.3 9.3-18.3 2.7-17.5-9.5-33.7-27-36.3z" fill="#69a85a"/></svg>
<svg class="b" style="left:1194.49px;top:928.12px" width="28.93" height="28.93" viewBox="0 0 1024 1024"><path d="M908.1 353.1l-253.9-36.9L540.7 86.1c-3.1-6.3-8.2-11.4-14.5-14.5-15.8-7.8-35-1.3-42.9 14.5L369.8 316.2l-253.9 36.9c-7 1-13.4 4.3-18.3 9.3a32.05 32.05 0 00.6 45.3l183.7 179.1-43.4 252.9a31.95 31.95 0 0046.4 33.7L512 754l227.1 119.4c6.2 3.3 13.4 4.4 20.3 3.2 17.4-3 29.1-19.5 26.1-36.9l-43.4-252.9 183.7-179.1c5-4.9 8.3-11.3 9.3-18.3 2.7-17.5-9.5-33.7-27-36.3z" fill="#69a85a"/></svg>
<div class="t " style="left:1348.00px;top:930.13px;font-size:26px;color:#212121;font-weight:400;transform:scaleX(0.9321);transform-origin:0 0;">Very pleased.</div>
<div class="b" style="left:3.00px;top:976.96px;width:2767.70px;height:67.62px;background:#f2f3f7;border-radius:10px"></div>
<div class="t " style="left:21.30px;top:997.75px;font-size:26px;color:#212121;font-weight:400;transform:scaleX(0.9983);transform-origin:0 0;">Terry</div>
<div class="b" style="left:648px;top:994.86px;width:36px;height:36px"><svg width="36" height="36" viewBox="0 0 36 36"><defs><clipPath id="fc"><circle cx="18" cy="18" r="18"/></clipPath></defs><g clip-path="url(#fc)"><rect width="36" height="36" fill="#fff"/><rect y="0.00" width="36" height="2.77" fill="#b1333b"/><rect y="5.54" width="36" height="2.77" fill="#b1333b"/><rect y="11.08" width="36" height="2.77" fill="#b1333b"/><rect y="16.62" width="36" height="2.77" fill="#b1333b"/><rect y="22.15" width="36" height="2.77" fill="#b1333b"/><rect y="27.69" width="36" height="2.77" fill="#b1333b"/><rect y="33.23" width="36" height="2.77" fill="#b1333b"/><rect width="18.2" height="19.4" fill="#1c2d62"/><circle cx="1.70" cy="1.60" r="0.5" fill="#fff"/><circle cx="4.70" cy="1.60" r="0.5" fill="#fff"/><circle cx="7.70" cy="1.60" r="0.5" fill="#fff"/><circle cx="10.70" cy="1.60" r="0.5" fill="#fff"/><circle cx="13.70" cy="1.60" r="0.5" fill="#fff"/><circle cx="16.70" cy="1.60" r="0.5" fill="#fff"/><circle cx="3.20" cy="3.65" r="0.5" fill="#fff"/><circle cx="6.20" cy="3.65" r="0.5" fill="#fff"/><circle cx="9.20" cy="3.65" r="0.5" fill="#fff"/><circle cx="12.20" cy="3.65" r="0.5" fill="#fff"/><circle cx="15.20" cy="3.65" r="0.5" fill="#fff"/><circle cx="1.70" cy="5.70" r="0.5" fill="#fff"/><circle cx="4.70" cy="5.70" r="0.5" fill="#fff"/><circle cx="7.70" cy="5.70" r="0.5" fill="#fff"/><circle cx="10.70" cy="5.70" r="0.5" fill="#fff"/><circle cx="13.70" cy="5.70" r="0.5" fill="#fff"/><circle cx="16.70" cy="5.70" r="0.5" fill="#fff"/><circle cx="3.20" cy="7.75" r="0.5" fill="#fff"/><circle cx="6.20" cy="7.75" r="0.5" fill="#fff"/><circle cx="9.20" cy="7.75" r="0.5" fill="#fff"/><circle cx="12.20" cy="7.75" r="0.5" fill="#fff"/><circle cx="15.20" cy="7.75" r="0.5" fill="#fff"/><circle cx="1.70" cy="9.80" r="0.5" fill="#fff"/><circle cx="4.70" cy="9.80" r="0.5" fill="#fff"/><circle cx="7.70" cy="9.80" r="0.5" fill="#fff"/><circle cx="10.70" cy="9.80" r="0.5" fill="#fff"/><circle cx="13.70" cy="9.80" r="0.5" fill="#fff"/><circle cx="16.70" cy="9.80" r="0.5" fill="#fff"/><circle cx="3.20" cy="11.85" r="0.5" fill="#fff"/><circle cx="6.20" cy="11.85" r="0.5" fill="#fff"/><circle cx="9.20" cy="11.85" r="0.5" fill="#fff"/><circle cx="12.20" cy="11.85" r="0.5" fill="#fff"/><circle cx="15.20" cy="11.85" r="0.5" fill="#fff"/><circle cx="1.70" cy="13.90" r="0.5" fill="#fff"/><circle cx="4.70" cy="13.90" r="0.5" fill="#fff"/><circle cx="7.70" cy="13.90" r="0.5" fill="#fff"/><circle cx="10.70" cy="13.90" r="0.5" fill="#fff"/><circle cx="13.70" cy="13.90" r="0.5" fill="#fff"/><circle cx="16.70" cy="13.90" r="0.5" fill="#fff"/><circle cx="3.20" cy="15.95" r="0.5" fill="#fff"/><circle cx="6.20" cy="15.95" r="0.5" fill="#fff"/><circle cx="9.20" cy="15.95" r="0.5" fill="#fff"/><circle cx="12.20" cy="15.95" r="0.5" fill="#fff"/><circle cx="15.20" cy="15.95" r="0.5" fill="#fff"/><circle cx="1.70" cy="18.00" r="0.5" fill="#fff"/><circle cx="4.70" cy="18.00" r="0.5" fill="#fff"/><circle cx="7.70" cy="18.00" r="0.5" fill="#fff"/><circle cx="10.70" cy="18.00" r="0.5" fill="#fff"/><circle cx="13.70" cy="18.00" r="0.5" fill="#fff"/><circle cx="16.70" cy="18.00" r="0.5" fill="#fff"/></g></svg></div>
<div class="t " style="left:770.75px;top:997.75px;font-size:26px;color:#212121;font-weight:400;transform:scaleX(0.9514);transform-origin:0 0;">24 Dec 2025</div>
<svg class="b" style="left:1057.29px;top:995.74px" width="28.93" height="28.93" viewBox="0 0 1024 1024"><path d="M908.1 353.1l-253.9-36.9L540.7 86.1c-3.1-6.3-8.2-11.4-14.5-14.5-15.8-7.8-35-1.3-42.9 14.5L369.8 316.2l-253.9 36.9c-7 1-13.4 4.3-18.3 9.3a32.05 32.05 0 00.6 45.3l183.7 179.1-43.4 252.9a31.95 31.95 0 0046.4 33.7L512 754l227.1 119.4c6.2 3.3 13.4 4.4 20.3 3.2 17.4-3 29.1-19.5 26.1-36.9l-43.4-252.9 183.7-179.1c5-4.9 8.3-11.3 9.3-18.3 2.7-17.5-9.5-33.7-27-36.3z" fill="#69a85a"/></svg>
<svg class="b" style="left:1091.59px;top:995.74px" width="28.93" height="28.93" viewBox="0 0 1024 1024"><path d="M908.1 353.1l-253.9-36.9L540.7 86.1c-3.1-6.3-8.2-11.4-14.5-14.5-15.8-7.8-35-1.3-42.9 14.5L369.8 316.2l-253.9 36.9c-7 1-13.4 4.3-18.3 9.3a32.05 32.05 0 00.6 45.3l183.7 179.1-43.4 252.9a31.95 31.95 0 0046.4 33.7L512 754l227.1 119.4c6.2 3.3 13.4 4.4 20.3 3.2 17.4-3 29.1-19.5 26.1-36.9l-43.4-252.9 183.7-179.1c5-4.9 8.3-11.3 9.3-18.3 2.7-17.5-9.5-33.7-27-36.3z" fill="#69a85a"/></svg>
<svg class="b" style="left:1125.89px;top:995.74px" width="28.93" height="28.93" viewBox="0 0 1024 1024"><path d="M908.1 353.1l-253.9-36.9L540.7 86.1c-3.1-6.3-8.2-11.4-14.5-14.5-15.8-7.8-35-1.3-42.9 14.5L369.8 316.2l-253.9 36.9c-7 1-13.4 4.3-18.3 9.3a32.05 32.05 0 00.6 45.3l183.7 179.1-43.4 252.9a31.95 31.95 0 0046.4 33.7L512 754l227.1 119.4c6.2 3.3 13.4 4.4 20.3 3.2 17.4-3 29.1-19.5 26.1-36.9l-43.4-252.9 183.7-179.1c5-4.9 8.3-11.3 9.3-18.3 2.7-17.5-9.5-33.7-27-36.3z" fill="#69a85a"/></svg>
<svg class="b" style="left:1160.19px;top:995.74px" width="28.93" height="28.93" viewBox="0 0 1024 1024"><path d="M908.1 353.1l-253.9-36.9L540.7 86.1c-3.1-6.3-8.2-11.4-14.5-14.5-15.8-7.8-35-1.3-42.9 14.5L369.8 316.2l-253.9 36.9c-7 1-13.4 4.3-18.3 9.3a32.05 32.05 0 00.6 45.3l183.7 179.1-43.4 252.9a31.95 31.95 0 0046.4 33.7L512 754l227.1 119.4c6.2 3.3 13.4 4.4 20.3 3.2 17.4-3 29.1-19.5 26.1-36.9l-43.4-252.9 183.7-179.1c5-4.9 8.3-11.3 9.3-18.3 2.7-17.5-9.5-33.7-27-36.3z" fill="#69a85a"/></svg>
<svg class="b" style="left:1194.49px;top:995.74px" width="28.93" height="28.93" viewBox="0 0 1024 1024"><path d="M908.1 353.1l-253.9-36.9L540.7 86.1c-3.1-6.3-8.2-11.4-14.5-14.5-15.8-7.8-35-1.3-42.9 14.5L369.8 316.2l-253.9 36.9c-7 1-13.4 4.3-18.3 9.3a32.05 32.05 0 00.6 45.3l183.7 179.1-43.4 252.9a31.95 31.95 0 0046.4 33.7L512 754l227.1 119.4c6.2 3.3 13.4 4.4 20.3 3.2 17.4-3 29.1-19.5 26.1-36.9l-43.4-252.9 183.7-179.1c5-4.9 8.3-11.3 9.3-18.3 2.7-17.5-9.5-33.7-27-36.3z" fill="#69a85a"/></svg>
<div class="t " style="left:1346.09px;top:997.75px;font-size:26px;color:#212121;font-weight:400;transform:scaleX(0.9542);transform-origin:0 0;">Beautiful quality material. Washed nice and no wrinkles. We will definitely be purchasing other products from Maison d'…</div>
<div class="t " style="left:21.30px;top:1065.37px;font-size:26px;color:#212121;font-weight:400;transform:scaleX(0.9056);transform-origin:0 0;">Just Sayin’</div>
<div class="b" style="left:648px;top:1062.48px;width:36px;height:36px"><svg width="36" height="36" viewBox="0 0 36 36"><defs><clipPath id="fc"><circle cx="18" cy="18" r="18"/></clipPath></defs><g clip-path="url(#fc)"><rect width="36" height="36" fill="#fff"/><rect y="0.00" width="36" height="2.77" fill="#b1333b"/><rect y="5.54" width="36" height="2.77" fill="#b1333b"/><rect y="11.08" width="36" height="2.77" fill="#b1333b"/><rect y="16.62" width="36" height="2.77" fill="#b1333b"/><rect y="22.15" width="36" height="2.77" fill="#b1333b"/><rect y="27.69" width="36" height="2.77" fill="#b1333b"/><rect y="33.23" width="36" height="2.77" fill="#b1333b"/><rect width="18.2" height="19.4" fill="#1c2d62"/><circle cx="1.70" cy="1.60" r="0.5" fill="#fff"/><circle cx="4.70" cy="1.60" r="0.5" fill="#fff"/><circle cx="7.70" cy="1.60" r="0.5" fill="#fff"/><circle cx="10.70" cy="1.60" r="0.5" fill="#fff"/><circle cx="13.70" cy="1.60" r="0.5" fill="#fff"/><circle cx="16.70" cy="1.60" r="0.5" fill="#fff"/><circle cx="3.20" cy="3.65" r="0.5" fill="#fff"/><circle cx="6.20" cy="3.65" r="0.5" fill="#fff"/><circle cx="9.20" cy="3.65" r="0.5" fill="#fff"/><circle cx="12.20" cy="3.65" r="0.5" fill="#fff"/><circle cx="15.20" cy="3.65" r="0.5" fill="#fff"/><circle cx="1.70" cy="5.70" r="0.5" fill="#fff"/><circle cx="4.70" cy="5.70" r="0.5" fill="#fff"/><circle cx="7.70" cy="5.70" r="0.5" fill="#fff"/><circle cx="10.70" cy="5.70" r="0.5" fill="#fff"/><circle cx="13.70" cy="5.70" r="0.5" fill="#fff"/><circle cx="16.70" cy="5.70" r="0.5" fill="#fff"/><circle cx="3.20" cy="7.75" r="0.5" fill="#fff"/><circle cx="6.20" cy="7.75" r="0.5" fill="#fff"/><circle cx="9.20" cy="7.75" r="0.5" fill="#fff"/><circle cx="12.20" cy="7.75" r="0.5" fill="#fff"/><circle cx="15.20" cy="7.75" r="0.5" fill="#fff"/><circle cx="1.70" cy="9.80" r="0.5" fill="#fff"/><circle cx="4.70" cy="9.80" r="0.5" fill="#fff"/><circle cx="7.70" cy="9.80" r="0.5" fill="#fff"/><circle cx="10.70" cy="9.80" r="0.5" fill="#fff"/><circle cx="13.70" cy="9.80" r="0.5" fill="#fff"/><circle cx="16.70" cy="9.80" r="0.5" fill="#fff"/><circle cx="3.20" cy="11.85" r="0.5" fill="#fff"/><circle cx="6.20" cy="11.85" r="0.5" fill="#fff"/><circle cx="9.20" cy="11.85" r="0.5" fill="#fff"/><circle cx="12.20" cy="11.85" r="0.5" fill="#fff"/><circle cx="15.20" cy="11.85" r="0.5" fill="#fff"/><circle cx="1.70" cy="13.90" r="0.5" fill="#fff"/><circle cx="4.70" cy="13.90" r="0.5" fill="#fff"/><circle cx="7.70" cy="13.90" r="0.5" fill="#fff"/><circle cx="10.70" cy="13.90" r="0.5" fill="#fff"/><circle cx="13.70" cy="13.90" r="0.5" fill="#fff"/><circle cx="16.70" cy="13.90" r="0.5" fill="#fff"/><circle cx="3.20" cy="15.95" r="0.5" fill="#fff"/><circle cx="6.20" cy="15.95" r="0.5" fill="#fff"/><circle cx="9.20" cy="15.95" r="0.5" fill="#fff"/><circle cx="12.20" cy="15.95" r="0.5" fill="#fff"/><circle cx="15.20" cy="15.95" r="0.5" fill="#fff"/><circle cx="1.70" cy="18.00" r="0.5" fill="#fff"/><circle cx="4.70" cy="18.00" r="0.5" fill="#fff"/><circle cx="7.70" cy="18.00" r="0.5" fill="#fff"/><circle cx="10.70" cy="18.00" r="0.5" fill="#fff"/><circle cx="13.70" cy="18.00" r="0.5" fill="#fff"/><circle cx="16.70" cy="18.00" r="0.5" fill="#fff"/></g></svg></div>
<div class="t " style="left:770.75px;top:1065.37px;font-size:26px;color:#212121;font-weight:400;transform:scaleX(0.9514);transform-origin:0 0;">24 Dec 2025</div>
<svg class="b" style="left:1057.29px;top:1063.36px" width="28.93" height="28.93" viewBox="0 0 1024 1024"><path d="M908.1 353.1l-253.9-36.9L540.7 86.1c-3.1-6.3-8.2-11.4-14.5-14.5-15.8-7.8-35-1.3-42.9 14.5L369.8 316.2l-253.9 36.9c-7 1-13.4 4.3-18.3 9.3a32.05 32.05 0 00.6 45.3l183.7 179.1-43.4 252.9a31.95 31.95 0 0046.4 33.7L512 754l227.1 119.4c6.2 3.3 13.4 4.4 20.3 3.2 17.4-3 29.1-19.5 26.1-36.9l-43.4-252.9 183.7-179.1c5-4.9 8.3-11.3 9.3-18.3 2.7-17.5-9.5-33.7-27-36.3z" fill="#cd4f47"/></svg>
<svg class="b" style="left:1091.59px;top:1063.36px" width="28.93" height="28.93" viewBox="0 0 1024 1024"><path d="M908.1 353.1l-253.9-36.9L540.7 86.1c-3.1-6.3-8.2-11.4-14.5-14.5-15.8-7.8-35-1.3-42.9 14.5L369.8 316.2l-253.9 36.9c-7 1-13.4 4.3-18.3 9.3a32.05 32.05 0 00.6 45.3l183.7 179.1-43.4 252.9a31.95 31.95 0 0046.4 33.7L512 754l227.1 119.4c6.2 3.3 13.4 4.4 20.3 3.2 17.4-3 29.1-19.5 26.1-36.9l-43.4-252.9 183.7-179.1c5-4.9 8.3-11.3 9.3-18.3 2.7-17.5-9.5-33.7-27-36.3zM664.8 561.6l36.1 210.3L512 672.7 323.1 772l36.1-210.3-152.8-149L417.6 382 512 190.7 606.4 382l211.2 30.7-152.8 148.9z" fill="#c4c4c4" fill-rule="nonzero"/></svg>
<svg class="b" style="left:1125.89px;top:1063.36px" width="28.93" height="28.93" viewBox="0 0 1024 1024"><path d="M908.1 353.1l-253.9-36.9L540.7 86.1c-3.1-6.3-8.2-11.4-14.5-14.5-15.8-7.8-35-1.3-42.9 14.5L369.8 316.2l-253.9 36.9c-7 1-13.4 4.3-18.3 9.3a32.05 32.05 0 00.6 45.3l183.7 179.1-43.4 252.9a31.95 31.95 0 0046.4 33.7L512 754l227.1 119.4c6.2 3.3 13.4 4.4 20.3 3.2 17.4-3 29.1-19.5 26.1-36.9l-43.4-252.9 183.7-179.1c5-4.9 8.3-11.3 9.3-18.3 2.7-17.5-9.5-33.7-27-36.3zM664.8 561.6l36.1 210.3L512 672.7 323.1 772l36.1-210.3-152.8-149L417.6 382 512 190.7 606.4 382l211.2 30.7-152.8 148.9z" fill="#c4c4c4" fill-rule="nonzero"/></svg>
<svg class="b" style="left:1160.19px;top:1063.36px" width="28.93" height="28.93" viewBox="0 0 1024 1024"><path d="M908.1 353.1l-253.9-36.9L540.7 86.1c-3.1-6.3-8.2-11.4-14.5-14.5-15.8-7.8-35-1.3-42.9 14.5L369.8 316.2l-253.9 36.9c-7 1-13.4 4.3-18.3 9.3a32.05 32.05 0 00.6 45.3l183.7 179.1-43.4 252.9a31.95 31.95 0 0046.4 33.7L512 754l227.1 119.4c6.2 3.3 13.4 4.4 20.3 3.2 17.4-3 29.1-19.5 26.1-36.9l-43.4-252.9 183.7-179.1c5-4.9 8.3-11.3 9.3-18.3 2.7-17.5-9.5-33.7-27-36.3zM664.8 561.6l36.1 210.3L512 672.7 323.1 772l36.1-210.3-152.8-149L417.6 382 512 190.7 606.4 382l211.2 30.7-152.8 148.9z" fill="#c4c4c4" fill-rule="nonzero"/></svg>
<svg class="b" style="left:1194.49px;top:1063.36px" width="28.93" height="28.93" viewBox="0 0 1024 1024"><path d="M908.1 353.1l-253.9-36.9L540.7 86.1c-3.1-6.3-8.2-11.4-14.5-14.5-15.8-7.8-35-1.3-42.9 14.5L369.8 316.2l-253.9 36.9c-7 1-13.4 4.3-18.3 9.3a32.05 32.05 0 00.6 45.3l183.7 179.1-43.4 252.9a31.95 31.95 0 0046.4 33.7L512 754l227.1 119.4c6.2 3.3 13.4 4.4 20.3 3.2 17.4-3 29.1-19.5 26.1-36.9l-43.4-252.9 183.7-179.1c5-4.9 8.3-11.3 9.3-18.3 2.7-17.5-9.5-33.7-27-36.3zM664.8 561.6l36.1 210.3L512 672.7 323.1 772l36.1-210.3-152.8-149L417.6 382 512 190.7 606.4 382l211.2 30.7-152.8 148.9z" fill="#c4c4c4" fill-rule="nonzero"/></svg>
<div class="t " style="left:1347.05px;top:1065.37px;font-size:26px;color:#212121;font-weight:400;transform:scaleX(0.9465);transform-origin:0 0;">Ordered 12/6 for a Christmas gift and the eta was moved later and later. Now today it’s finally in shipped status and won’t…</div>
<div class="b" style="left:1347.50px;top:1077.18px;width:1337.00px;height:2.10px;background:#141414"></div>
<div class="b" style="left:2716px;top:1053.78px;width:49px;height:49px;border-radius:50%;background:rgba(0,0,0,0.012)"></div>
<div class="b" style="left:2727.5px;top:1065.08px;width:26px;height:26px"><svg width="26" height="26" viewBox="0 0 26 26"><circle cx="13" cy="13" r="12.6" fill="#0f2d4e"/><text x="0" y="0" transform="translate(7.6,16.9) scale(0.8,1)" font-family="Liberation Sans" font-weight="700" font-size="21.5" fill="#fff">a</text><path d="M5.6 17.6 Q12.6 22.4 19.6 17.2" fill="none" stroke="#f0a22e" stroke-width="1.6" stroke-linecap="round"/><path d="M17.8 16.9 L19.9 17.0 L19.7 19.0" fill="none" stroke="#f0a22e" stroke-width="1.2" stroke-linecap="round" stroke-linejoin="round"/></svg></div>
<div class="b" style="left:3.00px;top:1112.20px;width:2767.70px;height:67.62px;background:#f2f3f7;border-radius:10px"></div>
<div class="t " style="left:19.30px;top:1132.99px;font-size:26px;color:#212121;font-weight:400;transform:scaleX(1.0000);transform-origin:0 0;">Kimberly</div>
<div class="b" style="left:648px;top:1130.10px;width:36px;height:36px"><svg width="36" height="36" viewBox="0 0 36 36"><defs><clipPath id="fc"><circle cx="18" cy="18" r="18"/></clipPath></defs><g clip-path="url(#fc)"><rect width="36" height="36" fill="#fff"/><rect y="0.00" width="36" height="2.77" fill="#b1333b"/><rect y="5.54" width="36" height="2.77" fill="#b1333b"/><rect y="11.08" width="36" height="2.77" fill="#b1333b"/><rect y="16.62" width="36" height="2.77" fill="#b1333b"/><rect y="22.15" width="36" height="2.77" fill="#b1333b"/><rect y="27.69" width="36" height="2.77" fill="#b1333b"/><rect y="33.23" width="36" height="2.77" fill="#b1333b"/><rect width="18.2" height="19.4" fill="#1c2d62"/><circle cx="1.70" cy="1.60" r="0.5" fill="#fff"/><circle cx="4.70" cy="1.60" r="0.5" fill="#fff"/><circle cx="7.70" cy="1.60" r="0.5" fill="#fff"/><circle cx="10.70" cy="1.60" r="0.5" fill="#fff"/><circle cx="13.70" cy="1.60" r="0.5" fill="#fff"/><circle cx="16.70" cy="1.60" r="0.5" fill="#fff"/><circle cx="3.20" cy="3.65" r="0.5" fill="#fff"/><circle cx="6.20" cy="3.65" r="0.5" fill="#fff"/><circle cx="9.20" cy="3.65" r="0.5" fill="#fff"/><circle cx="12.20" cy="3.65" r="0.5" fill="#fff"/><circle cx="15.20" cy="3.65" r="0.5" fill="#fff"/><circle cx="1.70" cy="5.70" r="0.5" fill="#fff"/><circle cx="4.70" cy="5.70" r="0.5" fill="#fff"/><circle cx="7.70" cy="5.70" r="0.5" fill="#fff"/><circle cx="10.70" cy="5.70" r="0.5" fill="#fff"/><circle cx="13.70" cy="5.70" r="0.5" fill="#fff"/><circle cx="16.70" cy="5.70" r="0.5" fill="#fff"/><circle cx="3.20" cy="7.75" r="0.5" fill="#fff"/><circle cx="6.20" cy="7.75" r="0.5" fill="#fff"/><circle cx="9.20" cy="7.75" r="0.5" fill="#fff"/><circle cx="12.20" cy="7.75" r="0.5" fill="#fff"/><circle cx="15.20" cy="7.75" r="0.5" fill="#fff"/><circle cx="1.70" cy="9.80" r="0.5" fill="#fff"/><circle cx="4.70" cy="9.80" r="0.5" fill="#fff"/><circle cx="7.70" cy="9.80" r="0.5" fill="#fff"/><circle cx="10.70" cy="9.80" r="0.5" fill="#fff"/><circle cx="13.70" cy="9.80" r="0.5" fill="#fff"/><circle cx="16.70" cy="9.80" r="0.5" fill="#fff"/><circle cx="3.20" cy="11.85" r="0.5" fill="#fff"/><circle cx="6.20" cy="11.85" r="0.5" fill="#fff"/><circle cx="9.20" cy="11.85" r="0.5" fill="#fff"/><circle cx="12.20" cy="11.85" r="0.5" fill="#fff"/><circle cx="15.20" cy="11.85" r="0.5" fill="#fff"/><circle cx="1.70" cy="13.90" r="0.5" fill="#fff"/><circle cx="4.70" cy="13.90" r="0.5" fill="#fff"/><circle cx="7.70" cy="13.90" r="0.5" fill="#fff"/><circle cx="10.70" cy="13.90" r="0.5" fill="#fff"/><circle cx="13.70" cy="13.90" r="0.5" fill="#fff"/><circle cx="16.70" cy="13.90" r="0.5" fill="#fff"/><circle cx="3.20" cy="15.95" r="0.5" fill="#fff"/><circle cx="6.20" cy="15.95" r="0.5" fill="#fff"/><circle cx="9.20" cy="15.95" r="0.5" fill="#fff"/><circle cx="12.20" cy="15.95" r="0.5" fill="#fff"/><circle cx="15.20" cy="15.95" r="0.5" fill="#fff"/><circle cx="1.70" cy="18.00" r="0.5" fill="#fff"/><circle cx="4.70" cy="18.00" r="0.5" fill="#fff"/><circle cx="7.70" cy="18.00" r="0.5" fill="#fff"/><circle cx="10.70" cy="18.00" r="0.5" fill="#fff"/><circle cx="13.70" cy="18.00" r="0.5" fill="#fff"/><circle cx="16.70" cy="18.00" r="0.5" fill="#fff"/></g></svg></div>
<div class="t " style="left:770.75px;top:1132.99px;font-size:26px;color:#212121;font-weight:400;transform:scaleX(0.9514);transform-origin:0 0;">23 Dec 2025</div>
<svg class="b" style="left:1057.29px;top:1130.98px" width="28.93" height="28.93" viewBox="0 0 1024 1024"><path d="M908.1 353.1l-253.9-36.9L540.7 86.1c-3.1-6.3-8.2-11.4-14.5-14.5-15.8-7.8-35-1.3-42.9 14.5L369.8 316.2l-253.9 36.9c-7 1-13.4 4.3-18.3 9.3a32.05 32.05 0 00.6 45.3l183.7 179.1-43.4 252.9a31.95 31.95 0 0046.4 33.7L512 754l227.1 119.4c6.2 3.3 13.4 4.4 20.3 3.2 17.4-3 29.1-19.5 26.1-36.9l-43.4-252.9 183.7-179.1c5-4.9 8.3-11.3 9.3-18.3 2.7-17.5-9.5-33.7-27-36.3z" fill="#69a85a"/></svg>
<svg class="b" style="left:1091.59px;top:1130.98px" width="28.93" height="28.93" viewBox="0 0 1024 1024"><path d="M908.1 353.1l-253.9-36.9L540.7 86.1c-3.1-6.3-8.2-11.4-14.5-14.5-15.8-7.8-35-1.3-42.9 14.5L369.8 316.2l-253.9 36.9c-7 1-13.4 4.3-18.3 9.3a32.05 32.05 0 00.6 45.3l183.7 179.1-43.4 252.9a31.95 31.95 0 0046.4 33.7L512 754l227.1 119.4c6.2 3.3 13.4 4.4 20.3 3.2 17.4-3 29.1-19.5 26.1-36.9l-43.4-252.9 183.7-179.1c5-4.9 8.3-11.3 9.3-18.3 2.7-17.5-9.5-33.7-27-36.3z" fill="#69a85a"/></svg>
<svg class="b" style="left:1125.89px;top:1130.98px" width="28.93" height="28.93" viewBox="0 0 1024 1024"><path d="M908.1 353.1l-253.9-36.9L540.7 86.1c-3.1-6.3-8.2-11.4-14.5-14.5-15.8-7.8-35-1.3-42.9 14.5L369.8 316.2l-253.9 36.9c-7 1-13.4 4.3-18.3 9.3a32.05 32.05 0 00.6 45.3l183.7 179.1-43.4 252.9a31.95 31.95 0 0046.4 33.7L512 754l227.1 119.4c6.2 3.3 13.4 4.4 20.3 3.2 17.4-3 29.1-19.5 26.1-36.9l-43.4-252.9 183.7-179.1c5-4.9 8.3-11.3 9.3-18.3 2.7-17.5-9.5-33.7-27-36.3z" fill="#69a85a"/></svg>
<svg class="b" style="left:1160.19px;top:1130.98px" width="28.93" height="28.93" viewBox="0 0 1024 1024"><path d="M908.1 353.1l-253.9-36.9L540.7 86.1c-3.1-6.3-8.2-11.4-14.5-14.5-15.8-7.8-35-1.3-42.9 14.5L369.8 316.2l-253.9 36.9c-7 1-13.4 4.3-18.3 9.3a32.05 32.05 0 00.6 45.3l183.7 179.1-43.4 252.9a31.95 31.95 0 0046.4 33.7L512 754l227.1 119.4c6.2 3.3 13.4 4.4 20.3 3.2 17.4-3 29.1-19.5 26.1-36.9l-43.4-252.9 183.7-179.1c5-4.9 8.3-11.3 9.3-18.3 2.7-17.5-9.5-33.7-27-36.3z" fill="#69a85a"/></svg>
<svg class="b" style="left:1194.49px;top:1130.98px" width="28.93" height="28.93" viewBox="0 0 1024 1024"><path d="M908.1 353.1l-253.9-36.9L540.7 86.1c-3.1-6.3-8.2-11.4-14.5-14.5-15.8-7.8-35-1.3-42.9 14.5L369.8 316.2l-253.9 36.9c-7 1-13.4 4.3-18.3 9.3a32.05 32.05 0 00.6 45.3l183.7 179.1-43.4 252.9a31.95 31.95 0 0046.4 33.7L512 754l227.1 119.4c6.2 3.3 13.4 4.4 20.3 3.2 17.4-3 29.1-19.5 26.1-36.9l-43.4-252.9 183.7-179.1c5-4.9 8.3-11.3 9.3-18.3 2.7-17.5-9.5-33.7-27-36.3z" fill="#69a85a"/></svg>
<div class="t " style="left:1348.00px;top:1132.99px;font-size:26px;color:#212121;font-weight:400;transform:scaleX(0.9409);transform-origin:0 0;">Arrived as expected. Well packed... They are beautiful for any event that requires an upgrade from paper.</div>
<div class="t " style="left:20.39px;top:1200.61px;font-size:26px;color:#212121;font-weight:400;transform:scaleX(0.9119);transform-origin:0 0;">Suzanne</div>
<div class="b" style="left:648px;top:1197.72px;width:36px;height:36px"><svg width="36" height="36" viewBox="0 0 36 36"><defs><clipPath id="fc"><circle cx="18" cy="18" r="18"/></clipPath></defs><g clip-path="url(#fc)"><rect width="36" height="36" fill="#fff"/><rect y="0.00" width="36" height="2.77" fill="#b1333b"/><rect y="5.54" width="36" height="2.77" fill="#b1333b"/><rect y="11.08" width="36" height="2.77" fill="#b1333b"/><rect y="16.62" width="36" height="2.77" fill="#b1333b"/><rect y="22.15" width="36" height="2.77" fill="#b1333b"/><rect y="27.69" width="36" height="2.77" fill="#b1333b"/><rect y="33.23" width="36" height="2.77" fill="#b1333b"/><rect width="18.2" height="19.4" fill="#1c2d62"/><circle cx="1.70" cy="1.60" r="0.5" fill="#fff"/><circle cx="4.70" cy="1.60" r="0.5" fill="#fff"/><circle cx="7.70" cy="1.60" r="0.5" fill="#fff"/><circle cx="10.70" cy="1.60" r="0.5" fill="#fff"/><circle cx="13.70" cy="1.60" r="0.5" fill="#fff"/><circle cx="16.70" cy="1.60" r="0.5" fill="#fff"/><circle cx="3.20" cy="3.65" r="0.5" fill="#fff"/><circle cx="6.20" cy="3.65" r="0.5" fill="#fff"/><circle cx="9.20" cy="3.65" r="0.5" fill="#fff"/><circle cx="12.20" cy="3.65" r="0.5" fill="#fff"/><circle cx="15.20" cy="3.65" r="0.5" fill="#fff"/><circle cx="1.70" cy="5.70" r="0.5" fill="#fff"/><circle cx="4.70" cy="5.70" r="0.5" fill="#fff"/><circle cx="7.70" cy="5.70" r="0.5" fill="#fff"/><circle cx="10.70" cy="5.70" r="0.5" fill="#fff"/><circle cx="13.70" cy="5.70" r="0.5" fill="#fff"/><circle cx="16.70" cy="5.70" r="0.5" fill="#fff"/><circle cx="3.20" cy="7.75" r="0.5" fill="#fff"/><circle cx="6.20" cy="7.75" r="0.5" fill="#fff"/><circle cx="9.20" cy="7.75" r="0.5" fill="#fff"/><circle cx="12.20" cy="7.75" r="0.5" fill="#fff"/><circle cx="15.20" cy="7.75" r="0.5" fill="#fff"/><circle cx="1.70" cy="9.80" r="0.5" fill="#fff"/><circle cx="4.70" cy="9.80" r="0.5" fill="#fff"/><circle cx="7.70" cy="9.80" r="0.5" fill="#fff"/><circle cx="10.70" cy="9.80" r="0.5" fill="#fff"/><circle cx="13.70" cy="9.80" r="0.5" fill="#fff"/><circle cx="16.70" cy="9.80" r="0.5" fill="#fff"/><circle cx="3.20" cy="11.85" r="0.5" fill="#fff"/><circle cx="6.20" cy="11.85" r="0.5" fill="#fff"/><circle cx="9.20" cy="11.85" r="0.5" fill="#fff"/><circle cx="12.20" cy="11.85" r="0.5" fill="#fff"/><circle cx="15.20" cy="11.85" r="0.5" fill="#fff"/><circle cx="1.70" cy="13.90" r="0.5" fill="#fff"/><circle cx="4.70" cy="13.90" r="0.5" fill="#fff"/><circle cx="7.70" cy="13.90" r="0.5" fill="#fff"/><circle cx="10.70" cy="13.90" r="0.5" fill="#fff"/><circle cx="13.70" cy="13.90" r="0.5" fill="#fff"/><circle cx="16.70" cy="13.90" r="0.5" fill="#fff"/><circle cx="3.20" cy="15.95" r="0.5" fill="#fff"/><circle cx="6.20" cy="15.95" r="0.5" fill="#fff"/><circle cx="9.20" cy="15.95" r="0.5" fill="#fff"/><circle cx="12.20" cy="15.95" r="0.5" fill="#fff"/><circle cx="15.20" cy="15.95" r="0.5" fill="#fff"/><circle cx="1.70" cy="18.00" r="0.5" fill="#fff"/><circle cx="4.70" cy="18.00" r="0.5" fill="#fff"/><circle cx="7.70" cy="18.00" r="0.5" fill="#fff"/><circle cx="10.70" cy="18.00" r="0.5" fill="#fff"/><circle cx="13.70" cy="18.00" r="0.5" fill="#fff"/><circle cx="16.70" cy="18.00" r="0.5" fill="#fff"/></g></svg></div>
<div class="t " style="left:770.75px;top:1200.61px;font-size:26px;color:#212121;font-weight:400;transform:scaleX(0.9514);transform-origin:0 0;">23 Dec 2025</div>
<svg class="b" style="left:1057.29px;top:1198.60px" width="28.93" height="28.93" viewBox="0 0 1024 1024"><path d="M908.1 353.1l-253.9-36.9L540.7 86.1c-3.1-6.3-8.2-11.4-14.5-14.5-15.8-7.8-35-1.3-42.9 14.5L369.8 316.2l-253.9 36.9c-7 1-13.4 4.3-18.3 9.3a32.05 32.05 0 00.6 45.3l183.7 179.1-43.4 252.9a31.95 31.95 0 0046.4 33.7L512 754l227.1 119.4c6.2 3.3 13.4 4.4 20.3 3.2 17.4-3 29.1-19.5 26.1-36.9l-43.4-252.9 183.7-179.1c5-4.9 8.3-11.3 9.3-18.3 2.7-17.5-9.5-33.7-27-36.3z" fill="#69a85a"/></svg>
<svg class="b" style="left:1091.59px;top:1198.60px" width="28.93" height="28.93" viewBox="0 0 1024 1024"><path d="M908.1 353.1l-253.9-36.9L540.7 86.1c-3.1-6.3-8.2-11.4-14.5-14.5-15.8-7.8-35-1.3-42.9 14.5L369.8 316.2l-253.9 36.9c-7 1-13.4 4.3-18.3 9.3a32.05 32.05 0 00.6 45.3l183.7 179.1-43.4 252.9a31.95 31.95 0 0046.4 33.7L512 754l227.1 119.4c6.2 3.3 13.4 4.4 20.3 3.2 17.4-3 29.1-19.5 26.1-36.9l-43.4-252.9 183.7-179.1c5-4.9 8.3-11.3 9.3-18.3 2.7-17.5-9.5-33.7-27-36.3z" fill="#69a85a"/></svg>
<svg class="b" style="left:1125.89px;top:1198.60px" width="28.93" height="28.93" viewBox="0 0 1024 1024"><path d="M908.1 353.1l-253.9-36.9L540.7 86.1c-3.1-6.3-8.2-11.4-14.5-14.5-15.8-7.8-35-1.3-42.9 14.5L369.8 316.2l-253.9 36.9c-7 1-13.4 4.3-18.3 9.3a32.05 32.05 0 00.6 45.3l183.7 179.1-43.4 252.9a31.95 31.95 0 0046.4 33.7L512 754l227.1 119.4c6.2 3.3 13.4 4.4 20.3 3.2 17.4-3 29.1-19.5 26.1-36.9l-43.4-252.9 183.7-179.1c5-4.9 8.3-11.3 9.3-18.3 2.7-17.5-9.5-33.7-27-36.3z" fill="#69a85a"/></svg>
<svg class="b" style="left:1160.19px;top:1198.60px" width="28.93" height="28.93" viewBox="0 0 1024 1024"><path d="M908.1 353.1l-253.9-36.9L540.7 86.1c-3.1-6.3-8.2-11.4-14.5-14.5-15.8-7.8-35-1.3-42.9 14.5L369.8 316.2l-253.9 36.9c-7 1-13.4 4.3-18.3 9.3a32.05 32.05 0 00.6 45.3l183.7 179.1-43.4 252.9a31.95 31.95 0 0046.4 33.7L512 754l227.1 119.4c6.2 3.3 13.4 4.4 20.3 3.2 17.4-3 29.1-19.5 26.1-36.9l-43.4-252.9 183.7-179.1c5-4.9 8.3-11.3 9.3-18.3 2.7-17.5-9.5-33.7-27-36.3z" fill="#69a85a"/></svg>
<svg class="b" style="left:1194.49px;top:1198.60px" width="28.93" height="28.93" viewBox="0 0 1024 1024"><path d="M908.1 353.1l-253.9-36.9L540.7 86.1c-3.1-6.3-8.2-11.4-14.5-14.5-15.8-7.8-35-1.3-42.9 14.5L369.8 316.2l-253.9 36.9c-7 1-13.4 4.3-18.3 9.3a32.05 32.05 0 00.6 45.3l183.7 179.1-43.4 252.9a31.95 31.95 0 0046.4 33.7L512 754l227.1 119.4c6.2 3.3 13.4 4.4 20.3 3.2 17.4-3 29.1-19.5 26.1-36.9l-43.4-252.9 183.7-179.1c5-4.9 8.3-11.3 9.3-18.3 2.7-17.5-9.5-33.7-27-36.3z" fill="#69a85a"/></svg>
<div class="t " style="left:1346.11px;top:1200.61px;font-size:26px;color:#212121;font-weight:400;transform:scaleX(0.9445);transform-origin:0 0;">My Maison d'Hermine table cloth arrived promptly, was nicely packaged, and was in perfect brand new condition, as…</div>
<div class="b" style="left:3.00px;top:1247.44px;width:2767.70px;height:67.62px;background:#f2f3f7;border-radius:10px"></div>
<div class="t " style="left:21.30px;top:1268.23px;font-size:26px;color:#212121;font-weight:400;transform:scaleX(0.9753);transform-origin:0 0;">Andrew</div>
<div class="b" style="left:648px;top:1265.34px;width:36px;height:36px"><svg width="36" height="36" viewBox="0 0 36 36"><defs><clipPath id="fc"><circle cx="18" cy="18" r="18"/></clipPath></defs><g clip-path="url(#fc)"><rect width="36" height="36" fill="#fff"/><rect y="0.00" width="36" height="2.77" fill="#b1333b"/><rect y="5.54" width="36" height="2.77" fill="#b1333b"/><rect y="11.08" width="36" height="2.77" fill="#b1333b"/><rect y="16.62" width="36" height="2.77" fill="#b1333b"/><rect y="22.15" width="36" height="2.77" fill="#b1333b"/><rect y="27.69" width="36" height="2.77" fill="#b1333b"/><rect y="33.23" width="36" height="2.77" fill="#b1333b"/><rect width="18.2" height="19.4" fill="#1c2d62"/><circle cx="1.70" cy="1.60" r="0.5" fill="#fff"/><circle cx="4.70" cy="1.60" r="0.5" fill="#fff"/><circle cx="7.70" cy="1.60" r="0.5" fill="#fff"/><circle cx="10.70" cy="1.60" r="0.5" fill="#fff"/><circle cx="13.70" cy="1.60" r="0.5" fill="#fff"/><circle cx="16.70" cy="1.60" r="0.5" fill="#fff"/><circle cx="3.20" cy="3.65" r="0.5" fill="#fff"/><circle cx="6.20" cy="3.65" r="0.5" fill="#fff"/><circle cx="9.20" cy="3.65" r="0.5" fill="#fff"/><circle cx="12.20" cy="3.65" r="0.5" fill="#fff"/><circle cx="15.20" cy="3.65" r="0.5" fill="#fff"/><circle cx="1.70" cy="5.70" r="0.5" fill="#fff"/><circle cx="4.70" cy="5.70" r="0.5" fill="#fff"/><circle cx="7.70" cy="5.70" r="0.5" fill="#fff"/><circle cx="10.70" cy="5.70" r="0.5" fill="#fff"/><circle cx="13.70" cy="5.70" r="0.5" fill="#fff"/><circle cx="16.70" cy="5.70" r="0.5" fill="#fff"/><circle cx="3.20" cy="7.75" r="0.5" fill="#fff"/><circle cx="6.20" cy="7.75" r="0.5" fill="#fff"/><circle cx="9.20" cy="7.75" r="0.5" fill="#fff"/><circle cx="12.20" cy="7.75" r="0.5" fill="#fff"/><circle cx="15.20" cy="7.75" r="0.5" fill="#fff"/><circle cx="1.70" cy="9.80" r="0.5" fill="#fff"/><circle cx="4.70" cy="9.80" r="0.5" fill="#fff"/><circle cx="7.70" cy="9.80" r="0.5" fill="#fff"/><circle cx="10.70" cy="9.80" r="0.5" fill="#fff"/><circle cx="13.70" cy="9.80" r="0.5" fill="#fff"/><circle cx="16.70" cy="9.80" r="0.5" fill="#fff"/><circle cx="3.20" cy="11.85" r="0.5" fill="#fff"/><circle cx="6.20" cy="11.85" r="0.5" fill="#fff"/><circle cx="9.20" cy="11.85" r="0.5" fill="#fff"/><circle cx="12.20" cy="11.85" r="0.5" fill="#fff"/><circle cx="15.20" cy="11.85" r="0.5" fill="#fff"/><circle cx="1.70" cy="13.90" r="0.5" fill="#fff"/><circle cx="4.70" cy="13.90" r="0.5" fill="#fff"/><circle cx="7.70" cy="13.90" r="0.5" fill="#fff"/><circle cx="10.70" cy="13.90" r="0.5" fill="#fff"/><circle cx="13.70" cy="13.90" r="0.5" fill="#fff"/><circle cx="16.70" cy="13.90" r="0.5" fill="#fff"/><circle cx="3.20" cy="15.95" r="0.5" fill="#fff"/><circle cx="6.20" cy="15.95" r="0.5" fill="#fff"/><circle cx="9.20" cy="15.95" r="0.5" fill="#fff"/><circle cx="12.20" cy="15.95" r="0.5" fill="#fff"/><circle cx="15.20" cy="15.95" r="0.5" fill="#fff"/><circle cx="1.70" cy="18.00" r="0.5" fill="#fff"/><circle cx="4.70" cy="18.00" r="0.5" fill="#fff"/><circle cx="7.70" cy="18.00" r="0.5" fill="#fff"/><circle cx="10.70" cy="18.00" r="0.5" fill="#fff"/><circle cx="13.70" cy="18.00" r="0.5" fill="#fff"/><circle cx="16.70" cy="18.00" r="0.5" fill="#fff"/></g></svg></div>
<div class="t " style="left:770.75px;top:1268.23px;font-size:26px;color:#212121;font-weight:400;transform:scaleX(0.9514);transform-origin:0 0;">23 Dec 2025</div>
<svg class="b" style="left:1057.29px;top:1266.22px" width="28.93" height="28.93" viewBox="0 0 1024 1024"><path d="M908.1 353.1l-253.9-36.9L540.7 86.1c-3.1-6.3-8.2-11.4-14.5-14.5-15.8-7.8-35-1.3-42.9 14.5L369.8 316.2l-253.9 36.9c-7 1-13.4 4.3-18.3 9.3a32.05 32.05 0 00.6 45.3l183.7 179.1-43.4 252.9a31.95 31.95 0 0046.4 33.7L512 754l227.1 119.4c6.2 3.3 13.4 4.4 20.3 3.2 17.4-3 29.1-19.5 26.1-36.9l-43.4-252.9 183.7-179.1c5-4.9 8.3-11.3 9.3-18.3 2.7-17.5-9.5-33.7-27-36.3z" fill="#69a85a"/></svg>
<svg class="b" style="left:1091.59px;top:1266.22px" width="28.93" height="28.93" viewBox="0 0 1024 1024"><path d="M908.1 353.1l-253.9-36.9L540.7 86.1c-3.1-6.3-8.2-11.4-14.5-14.5-15.8-7.8-35-1.3-42.9 14.5L369.8 316.2l-253.9 36.9c-7 1-13.4 4.3-18.3 9.3a32.05 32.05 0 00.6 45.3l183.7 179.1-43.4 252.9a31.95 31.95 0 0046.4 33.7L512 754l227.1 119.4c6.2 3.3 13.4 4.4 20.3 3.2 17.4-3 29.1-19.5 26.1-36.9l-43.4-252.9 183.7-179.1c5-4.9 8.3-11.3 9.3-18.3 2.7-17.5-9.5-33.7-27-36.3z" fill="#69a85a"/></svg>
<svg class="b" style="left:1125.89px;top:1266.22px" width="28.93" height="28.93" viewBox="0 0 1024 1024"><path d="M908.1 353.1l-253.9-36.9L540.7 86.1c-3.1-6.3-8.2-11.4-14.5-14.5-15.8-7.8-35-1.3-42.9 14.5L369.8 316.2l-253.9 36.9c-7 1-13.4 4.3-18.3 9.3a32.05 32.05 0 00.6 45.3l183.7 179.1-43.4 252.9a31.95 31.95 0 0046.4 33.7L512 754l227.1 119.4c6.2 3.3 13.4 4.4 20.3 3.2 17.4-3 29.1-19.5 26.1-36.9l-43.4-252.9 183.7-179.1c5-4.9 8.3-11.3 9.3-18.3 2.7-17.5-9.5-33.7-27-36.3z" fill="#69a85a"/></svg>
<svg class="b" style="left:1160.19px;top:1266.22px" width="28.93" height="28.93" viewBox="0 0 1024 1024"><path d="M908.1 353.1l-253.9-36.9L540.7 86.1c-3.1-6.3-8.2-11.4-14.5-14.5-15.8-7.8-35-1.3-42.9 14.5L369.8 316.2l-253.9 36.9c-7 1-13.4 4.3-18.3 9.3a32.05 32.05 0 00.6 45.3l183.7 179.1-43.4 252.9a31.95 31.95 0 0046.4 33.7L512 754l227.1 119.4c6.2 3.3 13.4 4.4 20.3 3.2 17.4-3 29.1-19.5 26.1-36.9l-43.4-252.9 183.7-179.1c5-4.9 8.3-11.3 9.3-18.3 2.7-17.5-9.5-33.7-27-36.3z" fill="#69a85a"/></svg>
<svg class="b" style="left:1194.49px;top:1266.22px" width="28.93" height="28.93" viewBox="0 0 1024 1024"><path d="M908.1 353.1l-253.9-36.9L540.7 86.1c-3.1-6.3-8.2-11.4-14.5-14.5-15.8-7.8-35-1.3-42.9 14.5L369.8 316.2l-253.9 36.9c-7 1-13.4 4.3-18.3 9.3a32.05 32.05 0 00.6 45.3l183.7 179.1-43.4 252.9a31.95 31.95 0 0046.4 33.7L512 754l227.1 119.4c6.2 3.3 13.4 4.4 20.3 3.2 17.4-3 29.1-19.5 26.1-36.9l-43.4-252.9 183.7-179.1c5-4.9 8.3-11.3 9.3-18.3 2.7-17.5-9.5-33.7-27-36.3z" fill="#69a85a"/></svg>
<div class="t " style="left:1346.09px;top:1268.23px;font-size:26px;color:#212121;font-weight:400;transform:scaleX(0.9561);transform-origin:0 0;">Fast shipping item perfect</div>
<div class="t " style="left:19.42px;top:1335.85px;font-size:26px;color:#212121;font-weight:400;transform:scaleX(0.9418);transform-origin:0 0;">R. Olmstead</div>
<div class="b" style="left:648px;top:1332.96px;width:36px;height:36px"><svg width="36" height="36" viewBox="0 0 36 36"><defs><clipPath id="fc"><circle cx="18" cy="18" r="18"/></clipPath></defs><g clip-path="url(#fc)"><rect width="36" height="36" fill="#fff"/><rect y="0.00" width="36" height="2.77" fill="#b1333b"/><rect y="5.54" width="36" height="2.77" fill="#b1333b"/><rect y="11.08" width="36" height="2.77" fill="#b1333b"/><rect y="16.62" width="36" height="2.77" fill="#b1333b"/><rect y="22.15" width="36" height="2.77" fill="#b1333b"/><rect y="27.69" width="36" height="2.77" fill="#b1333b"/><rect y="33.23" width="36" height="2.77" fill="#b1333b"/><rect width="18.2" height="19.4" fill="#1c2d62"/><circle cx="1.70" cy="1.60" r="0.5" fill="#fff"/><circle cx="4.70" cy="1.60" r="0.5" fill="#fff"/><circle cx="7.70" cy="1.60" r="0.5" fill="#fff"/><circle cx="10.70" cy="1.60" r="0.5" fill="#fff"/><circle cx="13.70" cy="1.60" r="0.5" fill="#fff"/><circle cx="16.70" cy="1.60" r="0.5" fill="#fff"/><circle cx="3.20" cy="3.65" r="0.5" fill="#fff"/><circle cx="6.20" cy="3.65" r="0.5" fill="#fff"/><circle cx="9.20" cy="3.65" r="0.5" fill="#fff"/><circle cx="12.20" cy="3.65" r="0.5" fill="#fff"/><circle cx="15.20" cy="3.65" r="0.5" fill="#fff"/><circle cx="1.70" cy="5.70" r="0.5" fill="#fff"/><circle cx="4.70" cy="5.70" r="0.5" fill="#fff"/><circle cx="7.70" cy="5.70" r="0.5" fill="#fff"/><circle cx="10.70" cy="5.70" r="0.5" fill="#fff"/><circle cx="13.70" cy="5.70" r="0.5" fill="#fff"/><circle cx="16.70" cy="5.70" r="0.5" fill="#fff"/><circle cx="3.20" cy="7.75" r="0.5" fill="#fff"/><circle cx="6.20" cy="7.75" r="0.5" fill="#fff"/><circle cx="9.20" cy="7.75" r="0.5" fill="#fff"/><circle cx="12.20" cy="7.75" r="0.5" fill="#fff"/><circle cx="15.20" cy="7.75" r="0.5" fill="#fff"/><circle cx="1.70" cy="9.80" r="0.5" fill="#fff"/><circle cx="4.70" cy="9.80" r="0.5" fill="#fff"/><circle cx="7.70" cy="9.80" r="0.5" fill="#fff"/><circle cx="10.70" cy="9.80" r="0.5" fill="#fff"/><circle cx="13.70" cy="9.80" r="0.5" fill="#fff"/><circle cx="16.70" cy="9.80" r="0.5" fill="#fff"/><circle cx="3.20" cy="11.85" r="0.5" fill="#fff"/><circle cx="6.20" cy="11.85" r="0.5" fill="#fff"/><circle cx="9.20" cy="11.85" r="0.5" fill="#fff"/><circle cx="12.20" cy="11.85" r="0.5" fill="#fff"/><circle cx="15.20" cy="11.85" r="0.5" fill="#fff"/><circle cx="1.70" cy="13.90" r="0.5" fill="#fff"/><circle cx="4.70" cy="13.90" r="0.5" fill="#fff"/><circle cx="7.70" cy="13.90" r="0.5" fill="#fff"/><circle cx="10.70" cy="13.90" r="0.5" fill="#fff"/><circle cx="13.70" cy="13.90" r="0.5" fill="#fff"/><circle cx="16.70" cy="13.90" r="0.5" fill="#fff"/><circle cx="3.20" cy="15.95" r="0.5" fill="#fff"/><circle cx="6.20" cy="15.95" r="0.5" fill="#fff"/><circle cx="9.20" cy="15.95" r="0.5" fill="#fff"/><circle cx="12.20" cy="15.95" r="0.5" fill="#fff"/><circle cx="15.20" cy="15.95" r="0.5" fill="#fff"/><circle cx="1.70" cy="18.00" r="0.5" fill="#fff"/><circle cx="4.70" cy="18.00" r="0.5" fill="#fff"/><circle cx="7.70" cy="18.00" r="0.5" fill="#fff"/><circle cx="10.70" cy="18.00" r="0.5" fill="#fff"/><circle cx="13.70" cy="18.00" r="0.5" fill="#fff"/><circle cx="16.70" cy="18.00" r="0.5" fill="#fff"/></g></svg></div>
<div class="t " style="left:770.75px;top:1335.85px;font-size:26px;color:#212121;font-weight:400;transform:scaleX(0.9514);transform-origin:0 0;">22 Dec 2025</div>
<svg class="b" style="left:1057.29px;top:1333.84px" width="28.93" height="28.93" viewBox="0 0 1024 1024"><path d="M908.1 353.1l-253.9-36.9L540.7 86.1c-3.1-6.3-8.2-11.4-14.5-14.5-15.8-7.8-35-1.3-42.9 14.5L369.8 316.2l-253.9 36.9c-7 1-13.4 4.3-18.3 9.3a32.05 32.05 0 00.6 45.3l183.7 179.1-43.4 252.9a31.95 31.95 0 0046.4 33.7L512 754l227.1 119.4c6.2 3.3 13.4 4.4 20.3 3.2 17.4-3 29.1-19.5 26.1-36.9l-43.4-252.9 183.7-179.1c5-4.9 8.3-11.3 9.3-18.3 2.7-17.5-9.5-33.7-27-36.3z" fill="#69a85a"/></svg>
<svg class="b" style="left:1091.59px;top:1333.84px" width="28.93" height="28.93" viewBox="0 0 1024 1024"><path d="M908.1 353.1l-253.9-36.9L540.7 86.1c-3.1-6.3-8.2-11.4-14.5-14.5-15.8-7.8-35-1.3-42.9 14.5L369.8 316.2l-253.9 36.9c-7 1-13.4 4.3-18.3 9.3a32.05 32.05 0 00.6 45.3l183.7 179.1-43.4 252.9a31.95 31.95 0 0046.4 33.7L512 754l227.1 119.4c6.2 3.3 13.4 4.4 20.3 3.2 17.4-3 29.1-19.5 26.1-36.9l-43.4-252.9 183.7-179.1c5-4.9 8.3-11.3 9.3-18.3 2.7-17.5-9.5-33.7-27-36.3z" fill="#69a85a"/></svg>
<svg class="b" style="left:1125.89px;top:1333.84px" width="28.93" height="28.93" viewBox="0 0 1024 1024"><path d="M908.1 353.1l-253.9-36.9L540.7 86.1c-3.1-6.3-8.2-11.4-14.5-14.5-15.8-7.8-35-1.3-42.9 14.5L369.8 316.2l-253.9 36.9c-7 1-13.4 4.3-18.3 9.3a32.05 32.05 0 00.6 45.3l183.7 179.1-43.4 252.9a31.95 31.95 0 0046.4 33.7L512 754l227.1 119.4c6.2 3.3 13.4 4.4 20.3 3.2 17.4-3 29.1-19.5 26.1-36.9l-43.4-252.9 183.7-179.1c5-4.9 8.3-11.3 9.3-18.3 2.7-17.5-9.5-33.7-27-36.3z" fill="#69a85a"/></svg>
<svg class="b" style="left:1160.19px;top:1333.84px" width="28.93" height="28.93" viewBox="0 0 1024 1024"><path d="M908.1 353.1l-253.9-36.9L540.7 86.1c-3.1-6.3-8.2-11.4-14.5-14.5-15.8-7.8-35-1.3-42.9 14.5L369.8 316.2l-253.9 36.9c-7 1-13.4 4.3-18.3 9.3a32.05 32.05 0 00.6 45.3l183.7 179.1-43.4 252.9a31.95 31.95 0 0046.4 33.7L512 754l227.1 119.4c6.2 3.3 13.4 4.4 20.3 3.2 17.4-3 29.1-19.5 26.1-36.9l-43.4-252.9 183.7-179.1c5-4.9 8.3-11.3 9.3-18.3 2.7-17.5-9.5-33.7-27-36.3z" fill="#69a85a"/></svg>
<svg class="b" style="left:1194.49px;top:1333.84px" width="28.93" height="28.93" viewBox="0 0 1024 1024"><path d="M908.1 353.1l-253.9-36.9L540.7 86.1c-3.1-6.3-8.2-11.4-14.5-14.5-15.8-7.8-35-1.3-42.9 14.5L369.8 316.2l-253.9 36.9c-7 1-13.4 4.3-18.3 9.3a32.05 32.05 0 00.6 45.3l183.7 179.1-43.4 252.9a31.95 31.95 0 0046.4 33.7L512 754l227.1 119.4c6.2 3.3 13.4 4.4 20.3 3.2 17.4-3 29.1-19.5 26.1-36.9l-43.4-252.9 183.7-179.1c5-4.9 8.3-11.3 9.3-18.3 2.7-17.5-9.5-33.7-27-36.3z" fill="#69a85a"/></svg>
<div class="t " style="left:1348.00px;top:1335.85px;font-size:26px;color:#212121;font-weight:400;transform:scaleX(0.9822);transform-origin:0 0;">Arrived quickly</div>
<div class="b" style="left:3.00px;top:1382.68px;width:2767.70px;height:67.62px;background:#f2f3f7;border-radius:10px"></div>
<div class="t " style="left:20.35px;top:1403.47px;font-size:26px;color:#212121;font-weight:400;transform:scaleX(0.9464);transform-origin:0 0;">debbie hallock</div>
<div class="b" style="left:648px;top:1400.58px;width:36px;height:36px"><svg width="36" height="36" viewBox="0 0 36 36"><defs><clipPath id="fc"><circle cx="18" cy="18" r="18"/></clipPath></defs><g clip-path="url(#fc)"><rect width="36" height="36" fill="#fff"/><rect y="0.00" width="36" height="2.77" fill="#b1333b"/><rect y="5.54" width="36" height="2.77" fill="#b1333b"/><rect y="11.08" width="36" height="2.77" fill="#b1333b"/><rect y="16.62" width="36" height="2.77" fill="#b1333b"/><rect y="22.15" width="36" height="2.77" fill="#b1333b"/><rect y="27.69" width="36" height="2.77" fill="#b1333b"/><rect y="33.23" width="36" height="2.77" fill="#b1333b"/><rect width="18.2" height="19.4" fill="#1c2d62"/><circle cx="1.70" cy="1.60" r="0.5" fill="#fff"/><circle cx="4.70" cy="1.60" r="0.5" fill="#fff"/><circle cx="7.70" cy="1.60" r="0.5" fill="#fff"/><circle cx="10.70" cy="1.60" r="0.5" fill="#fff"/><circle cx="13.70" cy="1.60" r="0.5" fill="#fff"/><circle cx="16.70" cy="1.60" r="0.5" fill="#fff"/><circle cx="3.20" cy="3.65" r="0.5" fill="#fff"/><circle cx="6.20" cy="3.65" r="0.5" fill="#fff"/><circle cx="9.20" cy="3.65" r="0.5" fill="#fff"/><circle cx="12.20" cy="3.65" r="0.5" fill="#fff"/><circle cx="15.20" cy="3.65" r="0.5" fill="#fff"/><circle cx="1.70" cy="5.70" r="0.5" fill="#fff"/><circle cx="4.70" cy="5.70" r="0.5" fill="#fff"/><circle cx="7.70" cy="5.70" r="0.5" fill="#fff"/><circle cx="10.70" cy="5.70" r="0.5" fill="#fff"/><circle cx="13.70" cy="5.70" r="0.5" fill="#fff"/><circle cx="16.70" cy="5.70" r="0.5" fill="#fff"/><circle cx="3.20" cy="7.75" r="0.5" fill="#fff"/><circle cx="6.20" cy="7.75" r="0.5" fill="#fff"/><circle cx="9.20" cy="7.75" r="0.5" fill="#fff"/><circle cx="12.20" cy="7.75" r="0.5" fill="#fff"/><circle cx="15.20" cy="7.75" r="0.5" fill="#fff"/><circle cx="1.70" cy="9.80" r="0.5" fill="#fff"/><circle cx="4.70" cy="9.80" r="0.5" fill="#fff"/><circle cx="7.70" cy="9.80" r="0.5" fill="#fff"/><circle cx="10.70" cy="9.80" r="0.5" fill="#fff"/><circle cx="13.70" cy="9.80" r="0.5" fill="#fff"/><circle cx="16.70" cy="9.80" r="0.5" fill="#fff"/><circle cx="3.20" cy="11.85" r="0.5" fill="#fff"/><circle cx="6.20" cy="11.85" r="0.5" fill="#fff"/><circle cx="9.20" cy="11.85" r="0.5" fill="#fff"/><circle cx="12.20" cy="11.85" r="0.5" fill="#fff"/><circle cx="15.20" cy="11.85" r="0.5" fill="#fff"/><circle cx="1.70" cy="13.90" r="0.5" fill="#fff"/><circle cx="4.70" cy="13.90" r="0.5" fill="#fff"/><circle cx="7.70" cy="13.90" r="0.5" fill="#fff"/><circle cx="10.70" cy="13.90" r="0.5" fill="#fff"/><circle cx="13.70" cy="13.90" r="0.5" fill="#fff"/><circle cx="16.70" cy="13.90" r="0.5" fill="#fff"/><circle cx="3.20" cy="15.95" r="0.5" fill="#fff"/><circle cx="6.20" cy="15.95" r="0.5" fill="#fff"/><circle cx="9.20" cy="15.95" r="0.5" fill="#fff"/><circle cx="12.20" cy="15.95" r="0.5" fill="#fff"/><circle cx="15.20" cy="15.95" r="0.5" fill="#fff"/><circle cx="1.70" cy="18.00" r="0.5" fill="#fff"/><circle cx="4.70" cy="18.00" r="0.5" fill="#fff"/><circle cx="7.70" cy="18.00" r="0.5" fill="#fff"/><circle cx="10.70" cy="18.00" r="0.5" fill="#fff"/><circle cx="13.70" cy="18.00" r="0.5" fill="#fff"/><circle cx="16.70" cy="18.00" r="0.5" fill="#fff"/></g></svg></div>
<div class="t " style="left:770.75px;top:1403.47px;font-size:26px;color:#212121;font-weight:400;transform:scaleX(0.9514);transform-origin:0 0;">22 Dec 2025</div>
<svg class="b" style="left:1057.29px;top:1401.46px" width="28.93" height="28.93" viewBox="0 0 1024 1024"><path d="M908.1 353.1l-253.9-36.9L540.7 86.1c-3.1-6.3-8.2-11.4-14.5-14.5-15.8-7.8-35-1.3-42.9 14.5L369.8 316.2l-253.9 36.9c-7 1-13.4 4.3-18.3 9.3a32.05 32.05 0 00.6 45.3l183.7 179.1-43.4 252.9a31.95 31.95 0 0046.4 33.7L512 754l227.1 119.4c6.2 3.3 13.4 4.4 20.3 3.2 17.4-3 29.1-19.5 26.1-36.9l-43.4-252.9 183.7-179.1c5-4.9 8.3-11.3 9.3-18.3 2.7-17.5-9.5-33.7-27-36.3z" fill="#cd4f47"/></svg>
<svg class="b" style="left:1091.59px;top:1401.46px" width="28.93" height="28.93" viewBox="0 0 1024 1024"><path d="M908.1 353.1l-253.9-36.9L540.7 86.1c-3.1-6.3-8.2-11.4-14.5-14.5-15.8-7.8-35-1.3-42.9 14.5L369.8 316.2l-253.9 36.9c-7 1-13.4 4.3-18.3 9.3a32.05 32.05 0 00.6 45.3l183.7 179.1-43.4 252.9a31.95 31.95 0 0046.4 33.7L512 754l227.1 119.4c6.2 3.3 13.4 4.4 20.3 3.2 17.4-3 29.1-19.5 26.1-36.9l-43.4-252.9 183.7-179.1c5-4.9 8.3-11.3 9.3-18.3 2.7-17.5-9.5-33.7-27-36.3zM664.8 561.6l36.1 210.3L512 672.7 323.1 772l36.1-210.3-152.8-149L417.6 382 512 190.7 606.4 382l211.2 30.7-152.8 148.9z" fill="#c4c4c4" fill-rule="nonzero"/></svg>
<svg class="b" style="left:1125.89px;top:1401.46px" width="28.93" height="28.93" viewBox="0 0 1024 1024"><path d="M908.1 353.1l-253.9-36.9L540.7 86.1c-3.1-6.3-8.2-11.4-14.5-14.5-15.8-7.8-35-1.3-42.9 14.5L369.8 316.2l-253.9 36.9c-7 1-13.4 4.3-18.3 9.3a32.05 32.05 0 00.6 45.3l183.7 179.1-43.4 252.9a31.95 31.95 0 0046.4 33.7L512 754l227.1 119.4c6.2 3.3 13.4 4.4 20.3 3.2 17.4-3 29.1-19.5 26.1-36.9l-43.4-252.9 183.7-179.1c5-4.9 8.3-11.3 9.3-18.3 2.7-17.5-9.5-33.7-27-36.3zM664.8 561.6l36.1 210.3L512 672.7 323.1 772l36.1-210.3-152.8-149L417.6 382 512 190.7 606.4 382l211.2 30.7-152.8 148.9z" fill="#c4c4c4" fill-rule="nonzero"/></svg>
<svg class="b" style="left:1160.19px;top:1401.46px" width="28.93" height="28.93" viewBox="0 0 1024 1024"><path d="M908.1 353.1l-253.9-36.9L540.7 86.1c-3.1-6.3-8.2-11.4-14.5-14.5-15.8-7.8-35-1.3-42.9 14.5L369.8 316.2l-253.9 36.9c-7 1-13.4 4.3-18.3 9.3a32.05 32.05 0 00.6 45.3l183.7 179.1-43.4 252.9a31.95 31.95 0 0046.4 33.7L512 754l227.1 119.4c6.2 3.3 13.4 4.4 20.3 3.2 17.4-3 29.1-19.5 26.1-36.9l-43.4-252.9 183.7-179.1c5-4.9 8.3-11.3 9.3-18.3 2.7-17.5-9.5-33.7-27-36.3zM664.8 561.6l36.1 210.3L512 672.7 323.1 772l36.1-210.3-152.8-149L417.6 382 512 190.7 606.4 382l211.2 30.7-152.8 148.9z" fill="#c4c4c4" fill-rule="nonzero"/></svg>
<svg class="b" style="left:1194.49px;top:1401.46px" width="28.93" height="28.93" viewBox="0 0 1024 1024"><path d="M908.1 353.1l-253.9-36.9L540.7 86.1c-3.1-6.3-8.2-11.4-14.5-14.5-15.8-7.8-35-1.3-42.9 14.5L369.8 316.2l-253.9 36.9c-7 1-13.4 4.3-18.3 9.3a32.05 32.05 0 00.6 45.3l183.7 179.1-43.4 252.9a31.95 31.95 0 0046.4 33.7L512 754l227.1 119.4c6.2 3.3 13.4 4.4 20.3 3.2 17.4-3 29.1-19.5 26.1-36.9l-43.4-252.9 183.7-179.1c5-4.9 8.3-11.3 9.3-18.3 2.7-17.5-9.5-33.7-27-36.3zM664.8 561.6l36.1 210.3L512 672.7 323.1 772l36.1-210.3-152.8-149L417.6 382 512 190.7 606.4 382l211.2 30.7-152.8 148.9z" fill="#c4c4c4" fill-rule="nonzero"/></svg>
<div class="t " style="left:1346.13px;top:1403.47px;font-size:26px;color:#212121;font-weight:400;transform:scaleX(0.9329);transform-origin:0 0;">I was so disappointed when I recieved this cup! It was a Christmas present for my husband. When I opened the box the cu…</div>
<div class="b" style="left:1347.50px;top:1415.28px;width:1331.70px;height:2.10px;background:#141414"></div>
<div class="b" style="left:2716px;top:1391.88px;width:49px;height:49px;border-radius:50%;background:rgba(0,0,0,0.012)"></div>
<div class="b" style="left:2727.5px;top:1403.18px;width:26px;height:26px"><svg width="26" height="26" viewBox="0 0 26 26"><circle cx="13" cy="13" r="12.6" fill="#0f2d4e"/><text x="0" y="0" transform="translate(7.6,16.9) scale(0.8,1)" font-family="Liberation Sans" font-weight="700" font-size="21.5" fill="#fff">a</text><path d="M5.6 17.6 Q12.6 22.4 19.6 17.2" fill="none" stroke="#f0a22e" stroke-width="1.6" stroke-linecap="round"/><path d="M17.8 16.9 L19.9 17.0 L19.7 19.0" fill="none" stroke="#f0a22e" stroke-width="1.2" stroke-linecap="round" stroke-linejoin="round"/></svg></div>
<div class="b" style="left:2155.2px;top:142.6px;width:449.8px;height:141.1px;background:rgba(19,19,19,0.92);border-radius:12px;box-shadow:0 6px 16px 0 rgba(0,0,0,.08),0 3px 6px -4px rgba(0,0,0,.12),0 9px 28px 8px rgba(0,0,0,.05)"></div>
<svg class="b" style="left:2368px;top:283.5px" width="24" height="11" viewBox="0 0 24 11"><path d="M0 0 L24 0 L13.5 10 Q12 11 10.5 10z" fill="rgba(19,19,19,0.92)"/></svg>
<div class="t " style="left:2168.84px;top:160.79px;font-size:26px;color:#fff;font-weight:400;transform:scaleX(0.9287);transform-origin:0 0;">Feedback handled by Amazon is not</div>
<div class="t " style="left:2170.13px;top:200.69px;font-size:26px;color:#fff;font-weight:400;transform:scaleX(0.9690);transform-origin:0 0;">included in the calculation for total</div>
<div class="t " style="left:2169.80px;top:239.49px;font-size:26px;color:#fff;font-weight:400;transform:scaleX(0.9349);transform-origin:0 0;">feedback and average rating.</div>
<div class="b" style="left:2715.2px;top:635.8px;width:67.5px;height:67.5px;border-radius:50%;background:#848bb3;box-shadow:0 5px 12px rgba(0,0,0,0.22)"></div>
<svg class="b" style="left:2710px;top:630px" width="80" height="80" viewBox="0 0 80 80"><g fill="#fff"><path d="M37.5 21.2 C41 22.8 44.5 24 47 27.5 C49 30.5 49.7 33.5 49.7 37.5 L49.7 42.5 C49.7 46.5 52.5 49 55.3 51.8 L19.9 51.8 C22.7 49 25.5 46.5 25.5 42.5 L25.5 37.5 C25.5 33.5 26.2 30.5 28.2 27.5 C30.7 24 34 22.8 37.5 21.2 Z"/><path d="M32.4 53.8 L43.1 53.8 C42.6 57.3 40.4 59.2 37.75 59.2 C35.1 59.2 32.9 57.3 32.4 53.8 Z"/></g><g fill="none" stroke="#fff" stroke-width="2.2" stroke-linecap="round"><path d="M21 27.4 Q23 23.4 27 21.5"/><path d="M55 27.6 Q53 23.4 49 21.5"/></g></svg>
<div class="b" style="left:-10px;top:1448px;width:158.5px;height:40px;background:#ee554a;border-radius:22px 22px 0 0"></div>
<div class="t " style="left:8.42px;top:1452.19px;font-size:26px;color:#fff;font-weight:700;transform:scaleX(0.7765);transform-origin:0 0;">Chat with us</div>
</body></html>
